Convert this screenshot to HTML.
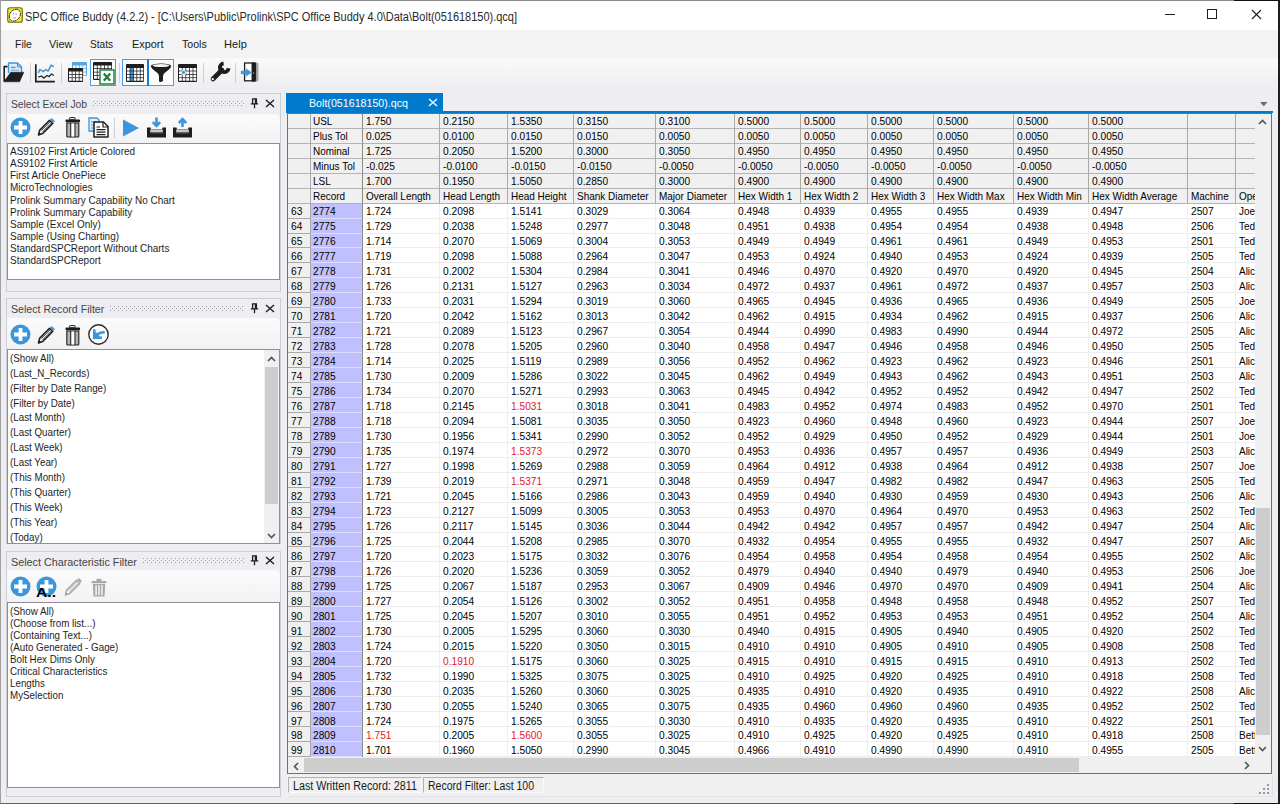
<!DOCTYPE html>
<html><head><meta charset="utf-8"><style>
html,body{margin:0;padding:0;width:1280px;height:804px;overflow:hidden;background:#eeeef2;font-family:"Liberation Sans",sans-serif;}
.t{position:absolute;white-space:pre;line-height:1;transform-origin:0 0;}
svg{position:absolute;overflow:visible}
</style></head><body>
<div style="position:absolute;left:0px;top:0px;width:1280px;height:804px;background:#eeeef2"></div>
<div style="position:absolute;left:0px;top:0px;width:1280px;height:30px;background:#ffffff"></div>
<div style="position:absolute;left:0px;top:30px;width:1280px;height:28px;background:#f3f3f4"></div>
<div style="position:absolute;left:0px;top:58px;width:1280px;height:29px;background:linear-gradient(#fafafa,#f3f3f5 60%,#eeeef2)"></div>
<div style="position:absolute;left:0px;top:0px;width:1280px;height:1px;background:#8a8a8a"></div>
<div style="position:absolute;left:0px;top:0px;width:1px;height:804px;background:#a0a0a0"></div>
<div style="position:absolute;left:1278px;top:0px;width:2px;height:804px;background:#1e1e1e"></div>
<div style="position:absolute;left:0px;top:803px;width:1280px;height:1px;background:#606060"></div>
<div style="position:absolute;left:1234px;top:803px;width:46px;height:1px;background:#111"></div>
<div class="t" style="left:25.00px;top:10.60px;font-size:12px;color:#2a2a2a;transform:scaleX(0.9148);">SPC Office Buddy (4.2.2) - [C:\Users\Public\Prolink\SPC Office Buddy 4.0\Data\Bolt(051618150).qcq]</div>
<div class="t" style="left:14.60px;top:38.52px;font-size:11.5px;color:#1a1a1a;transform:scaleX(0.9120);">File</div>
<div class="t" style="left:49.20px;top:38.52px;font-size:11.5px;color:#1a1a1a;transform:scaleX(0.9466);">View</div>
<div class="t" style="left:90.40px;top:38.52px;font-size:11.5px;color:#1a1a1a;transform:scaleX(0.8772);">Stats</div>
<div class="t" style="left:131.70px;top:38.52px;font-size:11.5px;color:#1a1a1a;transform:scaleX(0.9474);">Export</div>
<div class="t" style="left:181.50px;top:38.52px;font-size:11.5px;color:#1a1a1a;transform:scaleX(0.9233);">Tools</div>
<div class="t" style="left:224.20px;top:38.52px;font-size:11.5px;color:#1a1a1a;transform:scaleX(0.9638);">Help</div>
<div style="position:absolute;left:6px;top:93px;width:275px;height:199px;background:#eeeef2;box-sizing:border-box;border:1px solid #ccced6;border-bottom:none"></div>
<div style="position:absolute;left:7px;top:114px;width:273px;height:29px;background:linear-gradient(#fbfbfb,#f2f2f4);border-top-right-radius:5px"></div>
<div style="position:absolute;left:7px;top:143px;width:273px;height:137px;background:#fff;box-sizing:border-box;border:1px solid #8e8f96"></div>
<div class="t" style="left:11.00px;top:98.62px;font-size:11.5px;color:#444;transform:scaleX(0.8940);">Select Excel Job</div>
<div style="position:absolute;left:6px;top:280px;width:275px;height:12px;background:#eeeef2;box-sizing:border-box;border-left:1px solid #ccced6;border-right:1px solid #ccced6;border-bottom:1px solid #ccced6"></div>
<div style="position:absolute;left:6px;top:298px;width:275px;height:246px;background:#eeeef2;box-sizing:border-box;border:1px solid #ccced6;border-bottom:none"></div>
<div style="position:absolute;left:7px;top:318px;width:273px;height:31px;background:linear-gradient(#fbfbfb,#f2f2f4);border-top-right-radius:5px"></div>
<div style="position:absolute;left:7px;top:349px;width:273px;height:195px;background:#fff;box-sizing:border-box;border:1px solid #8e8f96"></div>
<div class="t" style="left:11.00px;top:303.62px;font-size:11.5px;color:#444;transform:scaleX(0.9239);">Select Record Filter</div>
<div style="position:absolute;left:6px;top:551px;width:275px;height:246px;background:#eeeef2;box-sizing:border-box;border:1px solid #ccced6;border-bottom:none"></div>
<div style="position:absolute;left:7px;top:570px;width:273px;height:32px;background:linear-gradient(#fbfbfb,#f2f2f4);border-top-right-radius:5px"></div>
<div style="position:absolute;left:7px;top:602px;width:273px;height:186px;background:#fff;box-sizing:border-box;border:1px solid #8e8f96"></div>
<div class="t" style="left:11.00px;top:556.62px;font-size:11.5px;color:#444;transform:scaleX(0.9373);">Select Characteristic Filter</div>
<div style="position:absolute;left:6px;top:788px;width:275px;height:9px;background:#eeeef2;box-sizing:border-box;border-left:1px solid #ccced6;border-right:1px solid #ccced6;border-bottom:1px solid #ccced6"></div>
<div class="t" style="left:9.80px;top:145.95px;font-size:11px;color:#1e1e1e;transform:scaleX(0.9050);">AS9102 First Article Colored</div>
<div class="t" style="left:9.80px;top:158.12px;font-size:11px;color:#1e1e1e;transform:scaleX(0.9050);">AS9102 First Article</div>
<div class="t" style="left:9.80px;top:170.29px;font-size:11px;color:#1e1e1e;transform:scaleX(0.9050);">First Article OnePiece</div>
<div class="t" style="left:9.80px;top:182.46px;font-size:11px;color:#1e1e1e;transform:scaleX(0.9050);">MicroTechnologies</div>
<div class="t" style="left:9.80px;top:194.63px;font-size:11px;color:#1e1e1e;transform:scaleX(0.9050);">Prolink Summary Capability No Chart</div>
<div class="t" style="left:9.80px;top:206.80px;font-size:11px;color:#1e1e1e;transform:scaleX(0.9050);">Prolink Summary Capability</div>
<div class="t" style="left:9.80px;top:218.97px;font-size:11px;color:#1e1e1e;transform:scaleX(0.9050);">Sample (Excel Only)</div>
<div class="t" style="left:9.80px;top:231.14px;font-size:11px;color:#1e1e1e;transform:scaleX(0.9050);">Sample (Using Charting)</div>
<div class="t" style="left:9.80px;top:243.31px;font-size:11px;color:#1e1e1e;transform:scaleX(0.9050);">StandardSPCReport Without Charts</div>
<div class="t" style="left:9.80px;top:255.48px;font-size:11px;color:#1e1e1e;transform:scaleX(0.9050);">StandardSPCReport</div>
<div class="t" style="left:10.30px;top:352.65px;font-size:11px;color:#1e1e1e;transform:scaleX(0.8900);">(Show All)</div>
<div class="t" style="left:10.30px;top:367.60px;font-size:11px;color:#1e1e1e;transform:scaleX(0.8900);">(Last_N_Records)</div>
<div class="t" style="left:10.30px;top:382.55px;font-size:11px;color:#1e1e1e;transform:scaleX(0.8900);">(Filter by Date Range)</div>
<div class="t" style="left:10.30px;top:397.50px;font-size:11px;color:#1e1e1e;transform:scaleX(0.8900);">(Filter by Date)</div>
<div class="t" style="left:10.30px;top:412.45px;font-size:11px;color:#1e1e1e;transform:scaleX(0.8900);">(Last Month)</div>
<div class="t" style="left:10.30px;top:427.40px;font-size:11px;color:#1e1e1e;transform:scaleX(0.8900);">(Last Quarter)</div>
<div class="t" style="left:10.30px;top:442.35px;font-size:11px;color:#1e1e1e;transform:scaleX(0.8900);">(Last Week)</div>
<div class="t" style="left:10.30px;top:457.30px;font-size:11px;color:#1e1e1e;transform:scaleX(0.8900);">(Last Year)</div>
<div class="t" style="left:10.30px;top:472.25px;font-size:11px;color:#1e1e1e;transform:scaleX(0.8900);">(This Month)</div>
<div class="t" style="left:10.30px;top:487.20px;font-size:11px;color:#1e1e1e;transform:scaleX(0.8900);">(This Quarter)</div>
<div class="t" style="left:10.30px;top:502.15px;font-size:11px;color:#1e1e1e;transform:scaleX(0.8900);">(This Week)</div>
<div class="t" style="left:10.30px;top:517.10px;font-size:11px;color:#1e1e1e;transform:scaleX(0.8900);">(This Year)</div>
<div class="t" style="left:10.30px;top:532.05px;font-size:11px;color:#1e1e1e;transform:scaleX(0.8900);">(Today)</div>
<div class="t" style="left:10.30px;top:605.75px;font-size:11px;color:#1e1e1e;transform:scaleX(0.8900);">(Show All)</div>
<div class="t" style="left:10.30px;top:617.77px;font-size:11px;color:#1e1e1e;transform:scaleX(0.8900);">(Choose from list...)</div>
<div class="t" style="left:10.30px;top:629.79px;font-size:11px;color:#1e1e1e;transform:scaleX(0.8900);">(Containing Text...)</div>
<div class="t" style="left:10.30px;top:641.81px;font-size:11px;color:#1e1e1e;transform:scaleX(0.8900);">(Auto Generated - Gage)</div>
<div class="t" style="left:10.30px;top:653.83px;font-size:11px;color:#1e1e1e;transform:scaleX(0.8900);">Bolt Hex Dims Only</div>
<div class="t" style="left:10.30px;top:665.85px;font-size:11px;color:#1e1e1e;transform:scaleX(0.8900);">Critical Characteristics</div>
<div class="t" style="left:10.30px;top:677.87px;font-size:11px;color:#1e1e1e;transform:scaleX(0.8900);">Lengths</div>
<div class="t" style="left:10.30px;top:689.89px;font-size:11px;color:#1e1e1e;transform:scaleX(0.8900);">MySelection</div>
<div style="position:absolute;left:286px;top:93px;width:157px;height:20px;background:#007acc"></div>
<div style="position:absolute;left:286px;top:111px;width:987px;height:2px;background:#007acc"></div>
<div class="t" style="left:309.00px;top:97.72px;font-size:11.5px;color:#fff;transform:scaleX(0.9271);">Bolt(051618150).qcq</div>
<div style="position:absolute;left:287px;top:113px;width:985px;height:661px;background:#fff;box-sizing:border-box;border:1px solid #707070"></div>
<div style="position:absolute;left:287px;top:774px;width:985px;height:22px;background:#f0f0f0;box-shadow:1px 1px 0 #e2e2e6"></div>
<div style="position:absolute;left:288px;top:777px;width:134px;height:16px;box-sizing:border-box;border:1px solid #b0b0b0;border-right-color:#fafafa;border-bottom-color:#fafafa"></div>
<div style="position:absolute;left:423px;top:777px;width:121px;height:16px;box-sizing:border-box;border:1px solid #b0b0b0;border-right-color:#fafafa;border-bottom-color:#fafafa"></div>
<div class="t" style="left:293.10px;top:779.70px;font-size:12px;color:#1a1a1a;transform:scaleX(0.8966);">Last Written Record: 2811</div>
<div class="t" style="left:427.90px;top:779.70px;font-size:12px;color:#1a1a1a;transform:scaleX(0.8732);">Record Filter: Last 100</div>
<div style="position:absolute;left:288px;top:114px;width:967px;height:89px;background:#f0f0f0"></div>
<div style="position:absolute;left:288px;top:204px;width:22px;height:553px;background:#f0f0f0"></div>
<div style="position:absolute;left:311px;top:204px;width:51px;height:553px;background:#c0c0fe"></div>
<div style="position:absolute;left:288px;top:114px;width:967px;height:643px;overflow:hidden">
<div style="position:absolute;left:0px;top:14px;width:967px;height:1px;background:#b4b4b4"></div>
<div style="position:absolute;left:0px;top:29px;width:967px;height:1px;background:#b4b4b4"></div>
<div style="position:absolute;left:0px;top:44px;width:967px;height:1px;background:#b4b4b4"></div>
<div style="position:absolute;left:0px;top:59px;width:967px;height:1px;background:#b4b4b4"></div>
<div style="position:absolute;left:0px;top:74px;width:967px;height:1px;background:#b4b4b4"></div>
<div style="position:absolute;left:0px;top:89px;width:967px;height:1px;background:#b4b4b4"></div>
<div style="position:absolute;left:74px;top:104px;width:893px;height:1px;background:#eeeeee"></div>
<div style="position:absolute;left:0px;top:104px;width:22px;height:1px;background:#a9a9a9"></div>
<div style="position:absolute;left:23px;top:104px;width:51px;height:1px;background:#dcdcfc"></div>
<div style="position:absolute;left:74px;top:119px;width:893px;height:1px;background:#eeeeee"></div>
<div style="position:absolute;left:0px;top:119px;width:22px;height:1px;background:#a9a9a9"></div>
<div style="position:absolute;left:23px;top:119px;width:51px;height:1px;background:#dcdcfc"></div>
<div style="position:absolute;left:74px;top:133px;width:893px;height:1px;background:#eeeeee"></div>
<div style="position:absolute;left:0px;top:133px;width:22px;height:1px;background:#a9a9a9"></div>
<div style="position:absolute;left:23px;top:133px;width:51px;height:1px;background:#dcdcfc"></div>
<div style="position:absolute;left:74px;top:148px;width:893px;height:1px;background:#eeeeee"></div>
<div style="position:absolute;left:0px;top:148px;width:22px;height:1px;background:#a9a9a9"></div>
<div style="position:absolute;left:23px;top:148px;width:51px;height:1px;background:#dcdcfc"></div>
<div style="position:absolute;left:74px;top:163px;width:893px;height:1px;background:#eeeeee"></div>
<div style="position:absolute;left:0px;top:163px;width:22px;height:1px;background:#a9a9a9"></div>
<div style="position:absolute;left:23px;top:163px;width:51px;height:1px;background:#dcdcfc"></div>
<div style="position:absolute;left:74px;top:178px;width:893px;height:1px;background:#eeeeee"></div>
<div style="position:absolute;left:0px;top:178px;width:22px;height:1px;background:#a9a9a9"></div>
<div style="position:absolute;left:23px;top:178px;width:51px;height:1px;background:#dcdcfc"></div>
<div style="position:absolute;left:74px;top:193px;width:893px;height:1px;background:#eeeeee"></div>
<div style="position:absolute;left:0px;top:193px;width:22px;height:1px;background:#a9a9a9"></div>
<div style="position:absolute;left:23px;top:193px;width:51px;height:1px;background:#dcdcfc"></div>
<div style="position:absolute;left:74px;top:208px;width:893px;height:1px;background:#eeeeee"></div>
<div style="position:absolute;left:0px;top:208px;width:22px;height:1px;background:#a9a9a9"></div>
<div style="position:absolute;left:23px;top:208px;width:51px;height:1px;background:#dcdcfc"></div>
<div style="position:absolute;left:74px;top:223px;width:893px;height:1px;background:#eeeeee"></div>
<div style="position:absolute;left:0px;top:223px;width:22px;height:1px;background:#a9a9a9"></div>
<div style="position:absolute;left:23px;top:223px;width:51px;height:1px;background:#dcdcfc"></div>
<div style="position:absolute;left:74px;top:238px;width:893px;height:1px;background:#eeeeee"></div>
<div style="position:absolute;left:0px;top:238px;width:22px;height:1px;background:#a9a9a9"></div>
<div style="position:absolute;left:23px;top:238px;width:51px;height:1px;background:#dcdcfc"></div>
<div style="position:absolute;left:74px;top:253px;width:893px;height:1px;background:#eeeeee"></div>
<div style="position:absolute;left:0px;top:253px;width:22px;height:1px;background:#a9a9a9"></div>
<div style="position:absolute;left:23px;top:253px;width:51px;height:1px;background:#dcdcfc"></div>
<div style="position:absolute;left:74px;top:268px;width:893px;height:1px;background:#eeeeee"></div>
<div style="position:absolute;left:0px;top:268px;width:22px;height:1px;background:#a9a9a9"></div>
<div style="position:absolute;left:23px;top:268px;width:51px;height:1px;background:#dcdcfc"></div>
<div style="position:absolute;left:74px;top:283px;width:893px;height:1px;background:#eeeeee"></div>
<div style="position:absolute;left:0px;top:283px;width:22px;height:1px;background:#a9a9a9"></div>
<div style="position:absolute;left:23px;top:283px;width:51px;height:1px;background:#dcdcfc"></div>
<div style="position:absolute;left:74px;top:298px;width:893px;height:1px;background:#eeeeee"></div>
<div style="position:absolute;left:0px;top:298px;width:22px;height:1px;background:#a9a9a9"></div>
<div style="position:absolute;left:23px;top:298px;width:51px;height:1px;background:#dcdcfc"></div>
<div style="position:absolute;left:74px;top:313px;width:893px;height:1px;background:#eeeeee"></div>
<div style="position:absolute;left:0px;top:313px;width:22px;height:1px;background:#a9a9a9"></div>
<div style="position:absolute;left:23px;top:313px;width:51px;height:1px;background:#dcdcfc"></div>
<div style="position:absolute;left:74px;top:328px;width:893px;height:1px;background:#eeeeee"></div>
<div style="position:absolute;left:0px;top:328px;width:22px;height:1px;background:#a9a9a9"></div>
<div style="position:absolute;left:23px;top:328px;width:51px;height:1px;background:#dcdcfc"></div>
<div style="position:absolute;left:74px;top:343px;width:893px;height:1px;background:#eeeeee"></div>
<div style="position:absolute;left:0px;top:343px;width:22px;height:1px;background:#a9a9a9"></div>
<div style="position:absolute;left:23px;top:343px;width:51px;height:1px;background:#dcdcfc"></div>
<div style="position:absolute;left:74px;top:358px;width:893px;height:1px;background:#eeeeee"></div>
<div style="position:absolute;left:0px;top:358px;width:22px;height:1px;background:#a9a9a9"></div>
<div style="position:absolute;left:23px;top:358px;width:51px;height:1px;background:#dcdcfc"></div>
<div style="position:absolute;left:74px;top:373px;width:893px;height:1px;background:#eeeeee"></div>
<div style="position:absolute;left:0px;top:373px;width:22px;height:1px;background:#a9a9a9"></div>
<div style="position:absolute;left:23px;top:373px;width:51px;height:1px;background:#dcdcfc"></div>
<div style="position:absolute;left:74px;top:388px;width:893px;height:1px;background:#eeeeee"></div>
<div style="position:absolute;left:0px;top:388px;width:22px;height:1px;background:#a9a9a9"></div>
<div style="position:absolute;left:23px;top:388px;width:51px;height:1px;background:#dcdcfc"></div>
<div style="position:absolute;left:74px;top:403px;width:893px;height:1px;background:#eeeeee"></div>
<div style="position:absolute;left:0px;top:403px;width:22px;height:1px;background:#a9a9a9"></div>
<div style="position:absolute;left:23px;top:403px;width:51px;height:1px;background:#dcdcfc"></div>
<div style="position:absolute;left:74px;top:418px;width:893px;height:1px;background:#eeeeee"></div>
<div style="position:absolute;left:0px;top:418px;width:22px;height:1px;background:#a9a9a9"></div>
<div style="position:absolute;left:23px;top:418px;width:51px;height:1px;background:#dcdcfc"></div>
<div style="position:absolute;left:74px;top:432px;width:893px;height:1px;background:#eeeeee"></div>
<div style="position:absolute;left:0px;top:432px;width:22px;height:1px;background:#a9a9a9"></div>
<div style="position:absolute;left:23px;top:432px;width:51px;height:1px;background:#dcdcfc"></div>
<div style="position:absolute;left:74px;top:447px;width:893px;height:1px;background:#eeeeee"></div>
<div style="position:absolute;left:0px;top:447px;width:22px;height:1px;background:#a9a9a9"></div>
<div style="position:absolute;left:23px;top:447px;width:51px;height:1px;background:#dcdcfc"></div>
<div style="position:absolute;left:74px;top:462px;width:893px;height:1px;background:#eeeeee"></div>
<div style="position:absolute;left:0px;top:462px;width:22px;height:1px;background:#a9a9a9"></div>
<div style="position:absolute;left:23px;top:462px;width:51px;height:1px;background:#dcdcfc"></div>
<div style="position:absolute;left:74px;top:477px;width:893px;height:1px;background:#eeeeee"></div>
<div style="position:absolute;left:0px;top:477px;width:22px;height:1px;background:#a9a9a9"></div>
<div style="position:absolute;left:23px;top:477px;width:51px;height:1px;background:#dcdcfc"></div>
<div style="position:absolute;left:74px;top:492px;width:893px;height:1px;background:#eeeeee"></div>
<div style="position:absolute;left:0px;top:492px;width:22px;height:1px;background:#a9a9a9"></div>
<div style="position:absolute;left:23px;top:492px;width:51px;height:1px;background:#dcdcfc"></div>
<div style="position:absolute;left:74px;top:507px;width:893px;height:1px;background:#eeeeee"></div>
<div style="position:absolute;left:0px;top:507px;width:22px;height:1px;background:#a9a9a9"></div>
<div style="position:absolute;left:23px;top:507px;width:51px;height:1px;background:#dcdcfc"></div>
<div style="position:absolute;left:74px;top:522px;width:893px;height:1px;background:#eeeeee"></div>
<div style="position:absolute;left:0px;top:522px;width:22px;height:1px;background:#a9a9a9"></div>
<div style="position:absolute;left:23px;top:522px;width:51px;height:1px;background:#dcdcfc"></div>
<div style="position:absolute;left:74px;top:537px;width:893px;height:1px;background:#eeeeee"></div>
<div style="position:absolute;left:0px;top:537px;width:22px;height:1px;background:#a9a9a9"></div>
<div style="position:absolute;left:23px;top:537px;width:51px;height:1px;background:#dcdcfc"></div>
<div style="position:absolute;left:74px;top:552px;width:893px;height:1px;background:#eeeeee"></div>
<div style="position:absolute;left:0px;top:552px;width:22px;height:1px;background:#a9a9a9"></div>
<div style="position:absolute;left:23px;top:552px;width:51px;height:1px;background:#dcdcfc"></div>
<div style="position:absolute;left:74px;top:567px;width:893px;height:1px;background:#eeeeee"></div>
<div style="position:absolute;left:0px;top:567px;width:22px;height:1px;background:#a9a9a9"></div>
<div style="position:absolute;left:23px;top:567px;width:51px;height:1px;background:#dcdcfc"></div>
<div style="position:absolute;left:74px;top:582px;width:893px;height:1px;background:#eeeeee"></div>
<div style="position:absolute;left:0px;top:582px;width:22px;height:1px;background:#a9a9a9"></div>
<div style="position:absolute;left:23px;top:582px;width:51px;height:1px;background:#dcdcfc"></div>
<div style="position:absolute;left:74px;top:597px;width:893px;height:1px;background:#eeeeee"></div>
<div style="position:absolute;left:0px;top:597px;width:22px;height:1px;background:#a9a9a9"></div>
<div style="position:absolute;left:23px;top:597px;width:51px;height:1px;background:#dcdcfc"></div>
<div style="position:absolute;left:74px;top:612px;width:893px;height:1px;background:#eeeeee"></div>
<div style="position:absolute;left:0px;top:612px;width:22px;height:1px;background:#a9a9a9"></div>
<div style="position:absolute;left:23px;top:612px;width:51px;height:1px;background:#dcdcfc"></div>
<div style="position:absolute;left:74px;top:627px;width:893px;height:1px;background:#eeeeee"></div>
<div style="position:absolute;left:0px;top:627px;width:22px;height:1px;background:#a9a9a9"></div>
<div style="position:absolute;left:23px;top:627px;width:51px;height:1px;background:#dcdcfc"></div>
<div style="position:absolute;left:74px;top:642px;width:893px;height:1px;background:#eeeeee"></div>
<div style="position:absolute;left:0px;top:642px;width:22px;height:1px;background:#a9a9a9"></div>
<div style="position:absolute;left:23px;top:642px;width:51px;height:1px;background:#dcdcfc"></div>
<div style="position:absolute;left:22px;top:0px;width:1px;height:643px;background:#a9a9a9"></div>
<div style="position:absolute;left:74px;top:0px;width:1px;height:643px;background:#8c8c8c"></div>
<div style="position:absolute;left:151px;top:0px;width:1px;height:89px;background:#a9a9a9"></div>
<div style="position:absolute;left:151px;top:90px;width:1px;height:553px;background:#eeeeee"></div>
<div style="position:absolute;left:219px;top:0px;width:1px;height:89px;background:#a9a9a9"></div>
<div style="position:absolute;left:219px;top:90px;width:1px;height:553px;background:#eeeeee"></div>
<div style="position:absolute;left:285px;top:0px;width:1px;height:89px;background:#a9a9a9"></div>
<div style="position:absolute;left:285px;top:90px;width:1px;height:553px;background:#eeeeee"></div>
<div style="position:absolute;left:367px;top:0px;width:1px;height:89px;background:#a9a9a9"></div>
<div style="position:absolute;left:367px;top:90px;width:1px;height:553px;background:#eeeeee"></div>
<div style="position:absolute;left:446px;top:0px;width:1px;height:89px;background:#a9a9a9"></div>
<div style="position:absolute;left:446px;top:90px;width:1px;height:553px;background:#eeeeee"></div>
<div style="position:absolute;left:512px;top:0px;width:1px;height:89px;background:#a9a9a9"></div>
<div style="position:absolute;left:512px;top:90px;width:1px;height:553px;background:#eeeeee"></div>
<div style="position:absolute;left:579px;top:0px;width:1px;height:89px;background:#a9a9a9"></div>
<div style="position:absolute;left:579px;top:90px;width:1px;height:553px;background:#eeeeee"></div>
<div style="position:absolute;left:645px;top:0px;width:1px;height:89px;background:#a9a9a9"></div>
<div style="position:absolute;left:645px;top:90px;width:1px;height:553px;background:#eeeeee"></div>
<div style="position:absolute;left:725px;top:0px;width:1px;height:89px;background:#a9a9a9"></div>
<div style="position:absolute;left:725px;top:90px;width:1px;height:553px;background:#eeeeee"></div>
<div style="position:absolute;left:800px;top:0px;width:1px;height:89px;background:#a9a9a9"></div>
<div style="position:absolute;left:800px;top:90px;width:1px;height:553px;background:#eeeeee"></div>
<div style="position:absolute;left:899px;top:0px;width:1px;height:89px;background:#a9a9a9"></div>
<div style="position:absolute;left:899px;top:90px;width:1px;height:553px;background:#eeeeee"></div>
<div style="position:absolute;left:947px;top:0px;width:1px;height:89px;background:#a9a9a9"></div>
<div style="position:absolute;left:947px;top:90px;width:1px;height:553px;background:#eeeeee"></div>
</div>
<div style="position:absolute;left:288px;top:114px;width:967px;height:643px;overflow:hidden">
<div class="t" style="left:24.50px;top:2.48px;font-size:10.5px;color:#000;transform:scaleX(0.9500);">USL</div>
<div class="t" style="left:77.50px;top:2.48px;font-size:10.5px;color:#000;transform:scaleX(0.9700);">1.750</div>
<div class="t" style="left:154.50px;top:2.48px;font-size:10.5px;color:#000;transform:scaleX(0.9700);">0.2150</div>
<div class="t" style="left:222.50px;top:2.48px;font-size:10.5px;color:#000;transform:scaleX(0.9700);">1.5350</div>
<div class="t" style="left:288.50px;top:2.48px;font-size:10.5px;color:#000;transform:scaleX(0.9700);">0.3150</div>
<div class="t" style="left:370.50px;top:2.48px;font-size:10.5px;color:#000;transform:scaleX(0.9700);">0.3100</div>
<div class="t" style="left:449.50px;top:2.48px;font-size:10.5px;color:#000;transform:scaleX(0.9700);">0.5000</div>
<div class="t" style="left:515.50px;top:2.48px;font-size:10.5px;color:#000;transform:scaleX(0.9700);">0.5000</div>
<div class="t" style="left:582.50px;top:2.48px;font-size:10.5px;color:#000;transform:scaleX(0.9700);">0.5000</div>
<div class="t" style="left:648.50px;top:2.48px;font-size:10.5px;color:#000;transform:scaleX(0.9700);">0.5000</div>
<div class="t" style="left:728.50px;top:2.48px;font-size:10.5px;color:#000;transform:scaleX(0.9700);">0.5000</div>
<div class="t" style="left:803.50px;top:2.48px;font-size:10.5px;color:#000;transform:scaleX(0.9700);">0.5000</div>
<div class="t" style="left:24.50px;top:17.42px;font-size:10.5px;color:#000;transform:scaleX(0.9500);">Plus Tol</div>
<div class="t" style="left:77.50px;top:17.42px;font-size:10.5px;color:#000;transform:scaleX(0.9700);">0.025</div>
<div class="t" style="left:154.50px;top:17.42px;font-size:10.5px;color:#000;transform:scaleX(0.9700);">0.0100</div>
<div class="t" style="left:222.50px;top:17.42px;font-size:10.5px;color:#000;transform:scaleX(0.9700);">0.0150</div>
<div class="t" style="left:288.50px;top:17.42px;font-size:10.5px;color:#000;transform:scaleX(0.9700);">0.0150</div>
<div class="t" style="left:370.50px;top:17.42px;font-size:10.5px;color:#000;transform:scaleX(0.9700);">0.0050</div>
<div class="t" style="left:449.50px;top:17.42px;font-size:10.5px;color:#000;transform:scaleX(0.9700);">0.0050</div>
<div class="t" style="left:515.50px;top:17.42px;font-size:10.5px;color:#000;transform:scaleX(0.9700);">0.0050</div>
<div class="t" style="left:582.50px;top:17.42px;font-size:10.5px;color:#000;transform:scaleX(0.9700);">0.0050</div>
<div class="t" style="left:648.50px;top:17.42px;font-size:10.5px;color:#000;transform:scaleX(0.9700);">0.0050</div>
<div class="t" style="left:728.50px;top:17.42px;font-size:10.5px;color:#000;transform:scaleX(0.9700);">0.0050</div>
<div class="t" style="left:803.50px;top:17.42px;font-size:10.5px;color:#000;transform:scaleX(0.9700);">0.0050</div>
<div class="t" style="left:24.50px;top:32.38px;font-size:10.5px;color:#000;transform:scaleX(0.9500);">Nominal</div>
<div class="t" style="left:77.50px;top:32.38px;font-size:10.5px;color:#000;transform:scaleX(0.9700);">1.725</div>
<div class="t" style="left:154.50px;top:32.38px;font-size:10.5px;color:#000;transform:scaleX(0.9700);">0.2050</div>
<div class="t" style="left:222.50px;top:32.38px;font-size:10.5px;color:#000;transform:scaleX(0.9700);">1.5200</div>
<div class="t" style="left:288.50px;top:32.38px;font-size:10.5px;color:#000;transform:scaleX(0.9700);">0.3000</div>
<div class="t" style="left:370.50px;top:32.38px;font-size:10.5px;color:#000;transform:scaleX(0.9700);">0.3050</div>
<div class="t" style="left:449.50px;top:32.38px;font-size:10.5px;color:#000;transform:scaleX(0.9700);">0.4950</div>
<div class="t" style="left:515.50px;top:32.38px;font-size:10.5px;color:#000;transform:scaleX(0.9700);">0.4950</div>
<div class="t" style="left:582.50px;top:32.38px;font-size:10.5px;color:#000;transform:scaleX(0.9700);">0.4950</div>
<div class="t" style="left:648.50px;top:32.38px;font-size:10.5px;color:#000;transform:scaleX(0.9700);">0.4950</div>
<div class="t" style="left:728.50px;top:32.38px;font-size:10.5px;color:#000;transform:scaleX(0.9700);">0.4950</div>
<div class="t" style="left:803.50px;top:32.38px;font-size:10.5px;color:#000;transform:scaleX(0.9700);">0.4950</div>
<div class="t" style="left:24.50px;top:47.33px;font-size:10.5px;color:#000;transform:scaleX(0.9500);">Minus Tol</div>
<div class="t" style="left:77.50px;top:47.33px;font-size:10.5px;color:#000;transform:scaleX(0.9700);">-0.025</div>
<div class="t" style="left:154.50px;top:47.33px;font-size:10.5px;color:#000;transform:scaleX(0.9700);">-0.0100</div>
<div class="t" style="left:222.50px;top:47.33px;font-size:10.5px;color:#000;transform:scaleX(0.9700);">-0.0150</div>
<div class="t" style="left:288.50px;top:47.33px;font-size:10.5px;color:#000;transform:scaleX(0.9700);">-0.0150</div>
<div class="t" style="left:370.50px;top:47.33px;font-size:10.5px;color:#000;transform:scaleX(0.9700);">-0.0050</div>
<div class="t" style="left:449.50px;top:47.33px;font-size:10.5px;color:#000;transform:scaleX(0.9700);">-0.0050</div>
<div class="t" style="left:515.50px;top:47.33px;font-size:10.5px;color:#000;transform:scaleX(0.9700);">-0.0050</div>
<div class="t" style="left:582.50px;top:47.33px;font-size:10.5px;color:#000;transform:scaleX(0.9700);">-0.0050</div>
<div class="t" style="left:648.50px;top:47.33px;font-size:10.5px;color:#000;transform:scaleX(0.9700);">-0.0050</div>
<div class="t" style="left:728.50px;top:47.33px;font-size:10.5px;color:#000;transform:scaleX(0.9700);">-0.0050</div>
<div class="t" style="left:803.50px;top:47.33px;font-size:10.5px;color:#000;transform:scaleX(0.9700);">-0.0050</div>
<div class="t" style="left:24.50px;top:62.27px;font-size:10.5px;color:#000;transform:scaleX(0.9500);">LSL</div>
<div class="t" style="left:77.50px;top:62.27px;font-size:10.5px;color:#000;transform:scaleX(0.9700);">1.700</div>
<div class="t" style="left:154.50px;top:62.27px;font-size:10.5px;color:#000;transform:scaleX(0.9700);">0.1950</div>
<div class="t" style="left:222.50px;top:62.27px;font-size:10.5px;color:#000;transform:scaleX(0.9700);">1.5050</div>
<div class="t" style="left:288.50px;top:62.27px;font-size:10.5px;color:#000;transform:scaleX(0.9700);">0.2850</div>
<div class="t" style="left:370.50px;top:62.27px;font-size:10.5px;color:#000;transform:scaleX(0.9700);">0.3000</div>
<div class="t" style="left:449.50px;top:62.27px;font-size:10.5px;color:#000;transform:scaleX(0.9700);">0.4900</div>
<div class="t" style="left:515.50px;top:62.27px;font-size:10.5px;color:#000;transform:scaleX(0.9700);">0.4900</div>
<div class="t" style="left:582.50px;top:62.27px;font-size:10.5px;color:#000;transform:scaleX(0.9700);">0.4900</div>
<div class="t" style="left:648.50px;top:62.27px;font-size:10.5px;color:#000;transform:scaleX(0.9700);">0.4900</div>
<div class="t" style="left:728.50px;top:62.27px;font-size:10.5px;color:#000;transform:scaleX(0.9700);">0.4900</div>
<div class="t" style="left:803.50px;top:62.27px;font-size:10.5px;color:#000;transform:scaleX(0.9700);">0.4900</div>
<div class="t" style="left:24.50px;top:77.23px;font-size:10.5px;color:#000;transform:scaleX(0.9500);">Record</div>
<div class="t" style="left:77.50px;top:77.23px;font-size:10.5px;color:#000;transform:scaleX(0.9500);">Overall Length</div>
<div class="t" style="left:154.50px;top:77.23px;font-size:10.5px;color:#000;transform:scaleX(0.9500);">Head Length</div>
<div class="t" style="left:222.50px;top:77.23px;font-size:10.5px;color:#000;transform:scaleX(0.9500);">Head Height</div>
<div class="t" style="left:288.50px;top:77.23px;font-size:10.5px;color:#000;transform:scaleX(0.9500);">Shank Diameter</div>
<div class="t" style="left:370.50px;top:77.23px;font-size:10.5px;color:#000;transform:scaleX(0.9500);">Major Diameter</div>
<div class="t" style="left:449.50px;top:77.23px;font-size:10.5px;color:#000;transform:scaleX(0.9500);">Hex Width 1</div>
<div class="t" style="left:515.50px;top:77.23px;font-size:10.5px;color:#000;transform:scaleX(0.9500);">Hex Width 2</div>
<div class="t" style="left:582.50px;top:77.23px;font-size:10.5px;color:#000;transform:scaleX(0.9500);">Hex Width 3</div>
<div class="t" style="left:648.50px;top:77.23px;font-size:10.5px;color:#000;transform:scaleX(0.9500);">Hex Width Max</div>
<div class="t" style="left:728.50px;top:77.23px;font-size:10.5px;color:#000;transform:scaleX(0.9500);">Hex Width Min</div>
<div class="t" style="left:803.50px;top:77.23px;font-size:10.5px;color:#000;transform:scaleX(0.9500);">Hex Width Average</div>
<div class="t" style="left:902.50px;top:77.23px;font-size:10.5px;color:#000;transform:scaleX(0.9500);">Machine</div>
<div class="t" style="left:950.50px;top:77.23px;font-size:10.5px;color:#000;transform:scaleX(0.9500);">Operator</div>
<div class="t" style="left:2.60px;top:92.17px;font-size:10.5px;color:#000;transform:scaleX(0.9700);">63</div>
<div class="t" style="left:24.50px;top:92.17px;font-size:10.5px;color:#000;transform:scaleX(0.9700);">2774</div>
<div class="t" style="left:77.50px;top:92.17px;font-size:10.5px;color:#000;transform:scaleX(0.9700);">1.724</div>
<div class="t" style="left:154.50px;top:92.17px;font-size:10.5px;color:#000;transform:scaleX(0.9700);">0.2098</div>
<div class="t" style="left:222.50px;top:92.17px;font-size:10.5px;color:#000;transform:scaleX(0.9700);">1.5141</div>
<div class="t" style="left:288.50px;top:92.17px;font-size:10.5px;color:#000;transform:scaleX(0.9700);">0.3029</div>
<div class="t" style="left:370.50px;top:92.17px;font-size:10.5px;color:#000;transform:scaleX(0.9700);">0.3064</div>
<div class="t" style="left:449.50px;top:92.17px;font-size:10.5px;color:#000;transform:scaleX(0.9700);">0.4948</div>
<div class="t" style="left:515.50px;top:92.17px;font-size:10.5px;color:#000;transform:scaleX(0.9700);">0.4939</div>
<div class="t" style="left:582.50px;top:92.17px;font-size:10.5px;color:#000;transform:scaleX(0.9700);">0.4955</div>
<div class="t" style="left:648.50px;top:92.17px;font-size:10.5px;color:#000;transform:scaleX(0.9700);">0.4955</div>
<div class="t" style="left:728.50px;top:92.17px;font-size:10.5px;color:#000;transform:scaleX(0.9700);">0.4939</div>
<div class="t" style="left:803.50px;top:92.17px;font-size:10.5px;color:#000;transform:scaleX(0.9700);">0.4947</div>
<div class="t" style="left:902.50px;top:92.17px;font-size:10.5px;color:#000;transform:scaleX(0.9700);">2507</div>
<div class="t" style="left:950.50px;top:92.17px;font-size:10.5px;color:#000;transform:scaleX(0.9500);">Joe</div>
<div class="t" style="left:2.60px;top:107.16px;font-size:10.5px;color:#000;transform:scaleX(0.9700);">64</div>
<div class="t" style="left:24.50px;top:107.16px;font-size:10.5px;color:#000;transform:scaleX(0.9700);">2775</div>
<div class="t" style="left:77.50px;top:107.16px;font-size:10.5px;color:#000;transform:scaleX(0.9700);">1.729</div>
<div class="t" style="left:154.50px;top:107.16px;font-size:10.5px;color:#000;transform:scaleX(0.9700);">0.2038</div>
<div class="t" style="left:222.50px;top:107.16px;font-size:10.5px;color:#000;transform:scaleX(0.9700);">1.5248</div>
<div class="t" style="left:288.50px;top:107.16px;font-size:10.5px;color:#000;transform:scaleX(0.9700);">0.2977</div>
<div class="t" style="left:370.50px;top:107.16px;font-size:10.5px;color:#000;transform:scaleX(0.9700);">0.3048</div>
<div class="t" style="left:449.50px;top:107.16px;font-size:10.5px;color:#000;transform:scaleX(0.9700);">0.4951</div>
<div class="t" style="left:515.50px;top:107.16px;font-size:10.5px;color:#000;transform:scaleX(0.9700);">0.4938</div>
<div class="t" style="left:582.50px;top:107.16px;font-size:10.5px;color:#000;transform:scaleX(0.9700);">0.4954</div>
<div class="t" style="left:648.50px;top:107.16px;font-size:10.5px;color:#000;transform:scaleX(0.9700);">0.4954</div>
<div class="t" style="left:728.50px;top:107.16px;font-size:10.5px;color:#000;transform:scaleX(0.9700);">0.4938</div>
<div class="t" style="left:803.50px;top:107.16px;font-size:10.5px;color:#000;transform:scaleX(0.9700);">0.4948</div>
<div class="t" style="left:902.50px;top:107.16px;font-size:10.5px;color:#000;transform:scaleX(0.9700);">2506</div>
<div class="t" style="left:950.50px;top:107.16px;font-size:10.5px;color:#000;transform:scaleX(0.9500);">Ted</div>
<div class="t" style="left:2.60px;top:122.14px;font-size:10.5px;color:#000;transform:scaleX(0.9700);">65</div>
<div class="t" style="left:24.50px;top:122.14px;font-size:10.5px;color:#000;transform:scaleX(0.9700);">2776</div>
<div class="t" style="left:77.50px;top:122.14px;font-size:10.5px;color:#000;transform:scaleX(0.9700);">1.714</div>
<div class="t" style="left:154.50px;top:122.14px;font-size:10.5px;color:#000;transform:scaleX(0.9700);">0.2070</div>
<div class="t" style="left:222.50px;top:122.14px;font-size:10.5px;color:#000;transform:scaleX(0.9700);">1.5069</div>
<div class="t" style="left:288.50px;top:122.14px;font-size:10.5px;color:#000;transform:scaleX(0.9700);">0.3004</div>
<div class="t" style="left:370.50px;top:122.14px;font-size:10.5px;color:#000;transform:scaleX(0.9700);">0.3053</div>
<div class="t" style="left:449.50px;top:122.14px;font-size:10.5px;color:#000;transform:scaleX(0.9700);">0.4949</div>
<div class="t" style="left:515.50px;top:122.14px;font-size:10.5px;color:#000;transform:scaleX(0.9700);">0.4949</div>
<div class="t" style="left:582.50px;top:122.14px;font-size:10.5px;color:#000;transform:scaleX(0.9700);">0.4961</div>
<div class="t" style="left:648.50px;top:122.14px;font-size:10.5px;color:#000;transform:scaleX(0.9700);">0.4961</div>
<div class="t" style="left:728.50px;top:122.14px;font-size:10.5px;color:#000;transform:scaleX(0.9700);">0.4949</div>
<div class="t" style="left:803.50px;top:122.14px;font-size:10.5px;color:#000;transform:scaleX(0.9700);">0.4953</div>
<div class="t" style="left:902.50px;top:122.14px;font-size:10.5px;color:#000;transform:scaleX(0.9700);">2501</div>
<div class="t" style="left:950.50px;top:122.14px;font-size:10.5px;color:#000;transform:scaleX(0.9500);">Ted</div>
<div class="t" style="left:2.60px;top:137.11px;font-size:10.5px;color:#000;transform:scaleX(0.9700);">66</div>
<div class="t" style="left:24.50px;top:137.11px;font-size:10.5px;color:#000;transform:scaleX(0.9700);">2777</div>
<div class="t" style="left:77.50px;top:137.11px;font-size:10.5px;color:#000;transform:scaleX(0.9700);">1.719</div>
<div class="t" style="left:154.50px;top:137.11px;font-size:10.5px;color:#000;transform:scaleX(0.9700);">0.2098</div>
<div class="t" style="left:222.50px;top:137.11px;font-size:10.5px;color:#000;transform:scaleX(0.9700);">1.5088</div>
<div class="t" style="left:288.50px;top:137.11px;font-size:10.5px;color:#000;transform:scaleX(0.9700);">0.2964</div>
<div class="t" style="left:370.50px;top:137.11px;font-size:10.5px;color:#000;transform:scaleX(0.9700);">0.3047</div>
<div class="t" style="left:449.50px;top:137.11px;font-size:10.5px;color:#000;transform:scaleX(0.9700);">0.4953</div>
<div class="t" style="left:515.50px;top:137.11px;font-size:10.5px;color:#000;transform:scaleX(0.9700);">0.4924</div>
<div class="t" style="left:582.50px;top:137.11px;font-size:10.5px;color:#000;transform:scaleX(0.9700);">0.4940</div>
<div class="t" style="left:648.50px;top:137.11px;font-size:10.5px;color:#000;transform:scaleX(0.9700);">0.4953</div>
<div class="t" style="left:728.50px;top:137.11px;font-size:10.5px;color:#000;transform:scaleX(0.9700);">0.4924</div>
<div class="t" style="left:803.50px;top:137.11px;font-size:10.5px;color:#000;transform:scaleX(0.9700);">0.4939</div>
<div class="t" style="left:902.50px;top:137.11px;font-size:10.5px;color:#000;transform:scaleX(0.9700);">2505</div>
<div class="t" style="left:950.50px;top:137.11px;font-size:10.5px;color:#000;transform:scaleX(0.9500);">Ted</div>
<div class="t" style="left:2.60px;top:152.09px;font-size:10.5px;color:#000;transform:scaleX(0.9700);">67</div>
<div class="t" style="left:24.50px;top:152.09px;font-size:10.5px;color:#000;transform:scaleX(0.9700);">2778</div>
<div class="t" style="left:77.50px;top:152.09px;font-size:10.5px;color:#000;transform:scaleX(0.9700);">1.731</div>
<div class="t" style="left:154.50px;top:152.09px;font-size:10.5px;color:#000;transform:scaleX(0.9700);">0.2002</div>
<div class="t" style="left:222.50px;top:152.09px;font-size:10.5px;color:#000;transform:scaleX(0.9700);">1.5304</div>
<div class="t" style="left:288.50px;top:152.09px;font-size:10.5px;color:#000;transform:scaleX(0.9700);">0.2984</div>
<div class="t" style="left:370.50px;top:152.09px;font-size:10.5px;color:#000;transform:scaleX(0.9700);">0.3041</div>
<div class="t" style="left:449.50px;top:152.09px;font-size:10.5px;color:#000;transform:scaleX(0.9700);">0.4946</div>
<div class="t" style="left:515.50px;top:152.09px;font-size:10.5px;color:#000;transform:scaleX(0.9700);">0.4970</div>
<div class="t" style="left:582.50px;top:152.09px;font-size:10.5px;color:#000;transform:scaleX(0.9700);">0.4920</div>
<div class="t" style="left:648.50px;top:152.09px;font-size:10.5px;color:#000;transform:scaleX(0.9700);">0.4970</div>
<div class="t" style="left:728.50px;top:152.09px;font-size:10.5px;color:#000;transform:scaleX(0.9700);">0.4920</div>
<div class="t" style="left:803.50px;top:152.09px;font-size:10.5px;color:#000;transform:scaleX(0.9700);">0.4945</div>
<div class="t" style="left:902.50px;top:152.09px;font-size:10.5px;color:#000;transform:scaleX(0.9700);">2504</div>
<div class="t" style="left:950.50px;top:152.09px;font-size:10.5px;color:#000;transform:scaleX(0.9500);">Alice</div>
<div class="t" style="left:2.60px;top:167.07px;font-size:10.5px;color:#000;transform:scaleX(0.9700);">68</div>
<div class="t" style="left:24.50px;top:167.07px;font-size:10.5px;color:#000;transform:scaleX(0.9700);">2779</div>
<div class="t" style="left:77.50px;top:167.07px;font-size:10.5px;color:#000;transform:scaleX(0.9700);">1.726</div>
<div class="t" style="left:154.50px;top:167.07px;font-size:10.5px;color:#000;transform:scaleX(0.9700);">0.2131</div>
<div class="t" style="left:222.50px;top:167.07px;font-size:10.5px;color:#000;transform:scaleX(0.9700);">1.5127</div>
<div class="t" style="left:288.50px;top:167.07px;font-size:10.5px;color:#000;transform:scaleX(0.9700);">0.2963</div>
<div class="t" style="left:370.50px;top:167.07px;font-size:10.5px;color:#000;transform:scaleX(0.9700);">0.3034</div>
<div class="t" style="left:449.50px;top:167.07px;font-size:10.5px;color:#000;transform:scaleX(0.9700);">0.4972</div>
<div class="t" style="left:515.50px;top:167.07px;font-size:10.5px;color:#000;transform:scaleX(0.9700);">0.4937</div>
<div class="t" style="left:582.50px;top:167.07px;font-size:10.5px;color:#000;transform:scaleX(0.9700);">0.4961</div>
<div class="t" style="left:648.50px;top:167.07px;font-size:10.5px;color:#000;transform:scaleX(0.9700);">0.4972</div>
<div class="t" style="left:728.50px;top:167.07px;font-size:10.5px;color:#000;transform:scaleX(0.9700);">0.4937</div>
<div class="t" style="left:803.50px;top:167.07px;font-size:10.5px;color:#000;transform:scaleX(0.9700);">0.4957</div>
<div class="t" style="left:902.50px;top:167.07px;font-size:10.5px;color:#000;transform:scaleX(0.9700);">2503</div>
<div class="t" style="left:950.50px;top:167.07px;font-size:10.5px;color:#000;transform:scaleX(0.9500);">Alice</div>
<div class="t" style="left:2.60px;top:182.05px;font-size:10.5px;color:#000;transform:scaleX(0.9700);">69</div>
<div class="t" style="left:24.50px;top:182.05px;font-size:10.5px;color:#000;transform:scaleX(0.9700);">2780</div>
<div class="t" style="left:77.50px;top:182.05px;font-size:10.5px;color:#000;transform:scaleX(0.9700);">1.733</div>
<div class="t" style="left:154.50px;top:182.05px;font-size:10.5px;color:#000;transform:scaleX(0.9700);">0.2031</div>
<div class="t" style="left:222.50px;top:182.05px;font-size:10.5px;color:#000;transform:scaleX(0.9700);">1.5294</div>
<div class="t" style="left:288.50px;top:182.05px;font-size:10.5px;color:#000;transform:scaleX(0.9700);">0.3019</div>
<div class="t" style="left:370.50px;top:182.05px;font-size:10.5px;color:#000;transform:scaleX(0.9700);">0.3060</div>
<div class="t" style="left:449.50px;top:182.05px;font-size:10.5px;color:#000;transform:scaleX(0.9700);">0.4965</div>
<div class="t" style="left:515.50px;top:182.05px;font-size:10.5px;color:#000;transform:scaleX(0.9700);">0.4945</div>
<div class="t" style="left:582.50px;top:182.05px;font-size:10.5px;color:#000;transform:scaleX(0.9700);">0.4936</div>
<div class="t" style="left:648.50px;top:182.05px;font-size:10.5px;color:#000;transform:scaleX(0.9700);">0.4965</div>
<div class="t" style="left:728.50px;top:182.05px;font-size:10.5px;color:#000;transform:scaleX(0.9700);">0.4936</div>
<div class="t" style="left:803.50px;top:182.05px;font-size:10.5px;color:#000;transform:scaleX(0.9700);">0.4949</div>
<div class="t" style="left:902.50px;top:182.05px;font-size:10.5px;color:#000;transform:scaleX(0.9700);">2505</div>
<div class="t" style="left:950.50px;top:182.05px;font-size:10.5px;color:#000;transform:scaleX(0.9500);">Joe</div>
<div class="t" style="left:2.60px;top:197.03px;font-size:10.5px;color:#000;transform:scaleX(0.9700);">70</div>
<div class="t" style="left:24.50px;top:197.03px;font-size:10.5px;color:#000;transform:scaleX(0.9700);">2781</div>
<div class="t" style="left:77.50px;top:197.03px;font-size:10.5px;color:#000;transform:scaleX(0.9700);">1.720</div>
<div class="t" style="left:154.50px;top:197.03px;font-size:10.5px;color:#000;transform:scaleX(0.9700);">0.2042</div>
<div class="t" style="left:222.50px;top:197.03px;font-size:10.5px;color:#000;transform:scaleX(0.9700);">1.5162</div>
<div class="t" style="left:288.50px;top:197.03px;font-size:10.5px;color:#000;transform:scaleX(0.9700);">0.3013</div>
<div class="t" style="left:370.50px;top:197.03px;font-size:10.5px;color:#000;transform:scaleX(0.9700);">0.3042</div>
<div class="t" style="left:449.50px;top:197.03px;font-size:10.5px;color:#000;transform:scaleX(0.9700);">0.4962</div>
<div class="t" style="left:515.50px;top:197.03px;font-size:10.5px;color:#000;transform:scaleX(0.9700);">0.4915</div>
<div class="t" style="left:582.50px;top:197.03px;font-size:10.5px;color:#000;transform:scaleX(0.9700);">0.4934</div>
<div class="t" style="left:648.50px;top:197.03px;font-size:10.5px;color:#000;transform:scaleX(0.9700);">0.4962</div>
<div class="t" style="left:728.50px;top:197.03px;font-size:10.5px;color:#000;transform:scaleX(0.9700);">0.4915</div>
<div class="t" style="left:803.50px;top:197.03px;font-size:10.5px;color:#000;transform:scaleX(0.9700);">0.4937</div>
<div class="t" style="left:902.50px;top:197.03px;font-size:10.5px;color:#000;transform:scaleX(0.9700);">2506</div>
<div class="t" style="left:950.50px;top:197.03px;font-size:10.5px;color:#000;transform:scaleX(0.9500);">Alice</div>
<div class="t" style="left:2.60px;top:212.01px;font-size:10.5px;color:#000;transform:scaleX(0.9700);">71</div>
<div class="t" style="left:24.50px;top:212.01px;font-size:10.5px;color:#000;transform:scaleX(0.9700);">2782</div>
<div class="t" style="left:77.50px;top:212.01px;font-size:10.5px;color:#000;transform:scaleX(0.9700);">1.721</div>
<div class="t" style="left:154.50px;top:212.01px;font-size:10.5px;color:#000;transform:scaleX(0.9700);">0.2089</div>
<div class="t" style="left:222.50px;top:212.01px;font-size:10.5px;color:#000;transform:scaleX(0.9700);">1.5123</div>
<div class="t" style="left:288.50px;top:212.01px;font-size:10.5px;color:#000;transform:scaleX(0.9700);">0.2967</div>
<div class="t" style="left:370.50px;top:212.01px;font-size:10.5px;color:#000;transform:scaleX(0.9700);">0.3054</div>
<div class="t" style="left:449.50px;top:212.01px;font-size:10.5px;color:#000;transform:scaleX(0.9700);">0.4944</div>
<div class="t" style="left:515.50px;top:212.01px;font-size:10.5px;color:#000;transform:scaleX(0.9700);">0.4990</div>
<div class="t" style="left:582.50px;top:212.01px;font-size:10.5px;color:#000;transform:scaleX(0.9700);">0.4983</div>
<div class="t" style="left:648.50px;top:212.01px;font-size:10.5px;color:#000;transform:scaleX(0.9700);">0.4990</div>
<div class="t" style="left:728.50px;top:212.01px;font-size:10.5px;color:#000;transform:scaleX(0.9700);">0.4944</div>
<div class="t" style="left:803.50px;top:212.01px;font-size:10.5px;color:#000;transform:scaleX(0.9700);">0.4972</div>
<div class="t" style="left:902.50px;top:212.01px;font-size:10.5px;color:#000;transform:scaleX(0.9700);">2505</div>
<div class="t" style="left:950.50px;top:212.01px;font-size:10.5px;color:#000;transform:scaleX(0.9500);">Alice</div>
<div class="t" style="left:2.60px;top:226.99px;font-size:10.5px;color:#000;transform:scaleX(0.9700);">72</div>
<div class="t" style="left:24.50px;top:226.99px;font-size:10.5px;color:#000;transform:scaleX(0.9700);">2783</div>
<div class="t" style="left:77.50px;top:226.99px;font-size:10.5px;color:#000;transform:scaleX(0.9700);">1.728</div>
<div class="t" style="left:154.50px;top:226.99px;font-size:10.5px;color:#000;transform:scaleX(0.9700);">0.2078</div>
<div class="t" style="left:222.50px;top:226.99px;font-size:10.5px;color:#000;transform:scaleX(0.9700);">1.5205</div>
<div class="t" style="left:288.50px;top:226.99px;font-size:10.5px;color:#000;transform:scaleX(0.9700);">0.2960</div>
<div class="t" style="left:370.50px;top:226.99px;font-size:10.5px;color:#000;transform:scaleX(0.9700);">0.3040</div>
<div class="t" style="left:449.50px;top:226.99px;font-size:10.5px;color:#000;transform:scaleX(0.9700);">0.4958</div>
<div class="t" style="left:515.50px;top:226.99px;font-size:10.5px;color:#000;transform:scaleX(0.9700);">0.4947</div>
<div class="t" style="left:582.50px;top:226.99px;font-size:10.5px;color:#000;transform:scaleX(0.9700);">0.4946</div>
<div class="t" style="left:648.50px;top:226.99px;font-size:10.5px;color:#000;transform:scaleX(0.9700);">0.4958</div>
<div class="t" style="left:728.50px;top:226.99px;font-size:10.5px;color:#000;transform:scaleX(0.9700);">0.4946</div>
<div class="t" style="left:803.50px;top:226.99px;font-size:10.5px;color:#000;transform:scaleX(0.9700);">0.4950</div>
<div class="t" style="left:902.50px;top:226.99px;font-size:10.5px;color:#000;transform:scaleX(0.9700);">2505</div>
<div class="t" style="left:950.50px;top:226.99px;font-size:10.5px;color:#000;transform:scaleX(0.9500);">Ted</div>
<div class="t" style="left:2.60px;top:241.98px;font-size:10.5px;color:#000;transform:scaleX(0.9700);">73</div>
<div class="t" style="left:24.50px;top:241.98px;font-size:10.5px;color:#000;transform:scaleX(0.9700);">2784</div>
<div class="t" style="left:77.50px;top:241.98px;font-size:10.5px;color:#000;transform:scaleX(0.9700);">1.714</div>
<div class="t" style="left:154.50px;top:241.98px;font-size:10.5px;color:#000;transform:scaleX(0.9700);">0.2025</div>
<div class="t" style="left:222.50px;top:241.98px;font-size:10.5px;color:#000;transform:scaleX(0.9700);">1.5119</div>
<div class="t" style="left:288.50px;top:241.98px;font-size:10.5px;color:#000;transform:scaleX(0.9700);">0.2989</div>
<div class="t" style="left:370.50px;top:241.98px;font-size:10.5px;color:#000;transform:scaleX(0.9700);">0.3056</div>
<div class="t" style="left:449.50px;top:241.98px;font-size:10.5px;color:#000;transform:scaleX(0.9700);">0.4952</div>
<div class="t" style="left:515.50px;top:241.98px;font-size:10.5px;color:#000;transform:scaleX(0.9700);">0.4962</div>
<div class="t" style="left:582.50px;top:241.98px;font-size:10.5px;color:#000;transform:scaleX(0.9700);">0.4923</div>
<div class="t" style="left:648.50px;top:241.98px;font-size:10.5px;color:#000;transform:scaleX(0.9700);">0.4962</div>
<div class="t" style="left:728.50px;top:241.98px;font-size:10.5px;color:#000;transform:scaleX(0.9700);">0.4923</div>
<div class="t" style="left:803.50px;top:241.98px;font-size:10.5px;color:#000;transform:scaleX(0.9700);">0.4946</div>
<div class="t" style="left:902.50px;top:241.98px;font-size:10.5px;color:#000;transform:scaleX(0.9700);">2501</div>
<div class="t" style="left:950.50px;top:241.98px;font-size:10.5px;color:#000;transform:scaleX(0.9500);">Alice</div>
<div class="t" style="left:2.60px;top:256.95px;font-size:10.5px;color:#000;transform:scaleX(0.9700);">74</div>
<div class="t" style="left:24.50px;top:256.95px;font-size:10.5px;color:#000;transform:scaleX(0.9700);">2785</div>
<div class="t" style="left:77.50px;top:256.95px;font-size:10.5px;color:#000;transform:scaleX(0.9700);">1.730</div>
<div class="t" style="left:154.50px;top:256.95px;font-size:10.5px;color:#000;transform:scaleX(0.9700);">0.2009</div>
<div class="t" style="left:222.50px;top:256.95px;font-size:10.5px;color:#000;transform:scaleX(0.9700);">1.5286</div>
<div class="t" style="left:288.50px;top:256.95px;font-size:10.5px;color:#000;transform:scaleX(0.9700);">0.3022</div>
<div class="t" style="left:370.50px;top:256.95px;font-size:10.5px;color:#000;transform:scaleX(0.9700);">0.3045</div>
<div class="t" style="left:449.50px;top:256.95px;font-size:10.5px;color:#000;transform:scaleX(0.9700);">0.4962</div>
<div class="t" style="left:515.50px;top:256.95px;font-size:10.5px;color:#000;transform:scaleX(0.9700);">0.4949</div>
<div class="t" style="left:582.50px;top:256.95px;font-size:10.5px;color:#000;transform:scaleX(0.9700);">0.4943</div>
<div class="t" style="left:648.50px;top:256.95px;font-size:10.5px;color:#000;transform:scaleX(0.9700);">0.4962</div>
<div class="t" style="left:728.50px;top:256.95px;font-size:10.5px;color:#000;transform:scaleX(0.9700);">0.4943</div>
<div class="t" style="left:803.50px;top:256.95px;font-size:10.5px;color:#000;transform:scaleX(0.9700);">0.4951</div>
<div class="t" style="left:902.50px;top:256.95px;font-size:10.5px;color:#000;transform:scaleX(0.9700);">2503</div>
<div class="t" style="left:950.50px;top:256.95px;font-size:10.5px;color:#000;transform:scaleX(0.9500);">Alice</div>
<div class="t" style="left:2.60px;top:271.94px;font-size:10.5px;color:#000;transform:scaleX(0.9700);">75</div>
<div class="t" style="left:24.50px;top:271.94px;font-size:10.5px;color:#000;transform:scaleX(0.9700);">2786</div>
<div class="t" style="left:77.50px;top:271.94px;font-size:10.5px;color:#000;transform:scaleX(0.9700);">1.734</div>
<div class="t" style="left:154.50px;top:271.94px;font-size:10.5px;color:#000;transform:scaleX(0.9700);">0.2070</div>
<div class="t" style="left:222.50px;top:271.94px;font-size:10.5px;color:#000;transform:scaleX(0.9700);">1.5271</div>
<div class="t" style="left:288.50px;top:271.94px;font-size:10.5px;color:#000;transform:scaleX(0.9700);">0.2993</div>
<div class="t" style="left:370.50px;top:271.94px;font-size:10.5px;color:#000;transform:scaleX(0.9700);">0.3063</div>
<div class="t" style="left:449.50px;top:271.94px;font-size:10.5px;color:#000;transform:scaleX(0.9700);">0.4945</div>
<div class="t" style="left:515.50px;top:271.94px;font-size:10.5px;color:#000;transform:scaleX(0.9700);">0.4942</div>
<div class="t" style="left:582.50px;top:271.94px;font-size:10.5px;color:#000;transform:scaleX(0.9700);">0.4952</div>
<div class="t" style="left:648.50px;top:271.94px;font-size:10.5px;color:#000;transform:scaleX(0.9700);">0.4952</div>
<div class="t" style="left:728.50px;top:271.94px;font-size:10.5px;color:#000;transform:scaleX(0.9700);">0.4942</div>
<div class="t" style="left:803.50px;top:271.94px;font-size:10.5px;color:#000;transform:scaleX(0.9700);">0.4947</div>
<div class="t" style="left:902.50px;top:271.94px;font-size:10.5px;color:#000;transform:scaleX(0.9700);">2502</div>
<div class="t" style="left:950.50px;top:271.94px;font-size:10.5px;color:#000;transform:scaleX(0.9500);">Ted</div>
<div class="t" style="left:2.60px;top:286.92px;font-size:10.5px;color:#000;transform:scaleX(0.9700);">76</div>
<div class="t" style="left:24.50px;top:286.92px;font-size:10.5px;color:#000;transform:scaleX(0.9700);">2787</div>
<div class="t" style="left:77.50px;top:286.92px;font-size:10.5px;color:#000;transform:scaleX(0.9700);">1.718</div>
<div class="t" style="left:154.50px;top:286.92px;font-size:10.5px;color:#000;transform:scaleX(0.9700);">0.2145</div>
<div class="t" style="left:222.50px;top:286.92px;font-size:10.5px;color:#e0202a;transform:scaleX(0.9700);">1.5031</div>
<div class="t" style="left:288.50px;top:286.92px;font-size:10.5px;color:#000;transform:scaleX(0.9700);">0.3018</div>
<div class="t" style="left:370.50px;top:286.92px;font-size:10.5px;color:#000;transform:scaleX(0.9700);">0.3041</div>
<div class="t" style="left:449.50px;top:286.92px;font-size:10.5px;color:#000;transform:scaleX(0.9700);">0.4983</div>
<div class="t" style="left:515.50px;top:286.92px;font-size:10.5px;color:#000;transform:scaleX(0.9700);">0.4952</div>
<div class="t" style="left:582.50px;top:286.92px;font-size:10.5px;color:#000;transform:scaleX(0.9700);">0.4974</div>
<div class="t" style="left:648.50px;top:286.92px;font-size:10.5px;color:#000;transform:scaleX(0.9700);">0.4983</div>
<div class="t" style="left:728.50px;top:286.92px;font-size:10.5px;color:#000;transform:scaleX(0.9700);">0.4952</div>
<div class="t" style="left:803.50px;top:286.92px;font-size:10.5px;color:#000;transform:scaleX(0.9700);">0.4970</div>
<div class="t" style="left:902.50px;top:286.92px;font-size:10.5px;color:#000;transform:scaleX(0.9700);">2501</div>
<div class="t" style="left:950.50px;top:286.92px;font-size:10.5px;color:#000;transform:scaleX(0.9500);">Ted</div>
<div class="t" style="left:2.60px;top:301.89px;font-size:10.5px;color:#000;transform:scaleX(0.9700);">77</div>
<div class="t" style="left:24.50px;top:301.89px;font-size:10.5px;color:#000;transform:scaleX(0.9700);">2788</div>
<div class="t" style="left:77.50px;top:301.89px;font-size:10.5px;color:#000;transform:scaleX(0.9700);">1.718</div>
<div class="t" style="left:154.50px;top:301.89px;font-size:10.5px;color:#000;transform:scaleX(0.9700);">0.2094</div>
<div class="t" style="left:222.50px;top:301.89px;font-size:10.5px;color:#000;transform:scaleX(0.9700);">1.5081</div>
<div class="t" style="left:288.50px;top:301.89px;font-size:10.5px;color:#000;transform:scaleX(0.9700);">0.3035</div>
<div class="t" style="left:370.50px;top:301.89px;font-size:10.5px;color:#000;transform:scaleX(0.9700);">0.3050</div>
<div class="t" style="left:449.50px;top:301.89px;font-size:10.5px;color:#000;transform:scaleX(0.9700);">0.4923</div>
<div class="t" style="left:515.50px;top:301.89px;font-size:10.5px;color:#000;transform:scaleX(0.9700);">0.4960</div>
<div class="t" style="left:582.50px;top:301.89px;font-size:10.5px;color:#000;transform:scaleX(0.9700);">0.4948</div>
<div class="t" style="left:648.50px;top:301.89px;font-size:10.5px;color:#000;transform:scaleX(0.9700);">0.4960</div>
<div class="t" style="left:728.50px;top:301.89px;font-size:10.5px;color:#000;transform:scaleX(0.9700);">0.4923</div>
<div class="t" style="left:803.50px;top:301.89px;font-size:10.5px;color:#000;transform:scaleX(0.9700);">0.4944</div>
<div class="t" style="left:902.50px;top:301.89px;font-size:10.5px;color:#000;transform:scaleX(0.9700);">2507</div>
<div class="t" style="left:950.50px;top:301.89px;font-size:10.5px;color:#000;transform:scaleX(0.9500);">Joe</div>
<div class="t" style="left:2.60px;top:316.88px;font-size:10.5px;color:#000;transform:scaleX(0.9700);">78</div>
<div class="t" style="left:24.50px;top:316.88px;font-size:10.5px;color:#000;transform:scaleX(0.9700);">2789</div>
<div class="t" style="left:77.50px;top:316.88px;font-size:10.5px;color:#000;transform:scaleX(0.9700);">1.730</div>
<div class="t" style="left:154.50px;top:316.88px;font-size:10.5px;color:#000;transform:scaleX(0.9700);">0.1956</div>
<div class="t" style="left:222.50px;top:316.88px;font-size:10.5px;color:#000;transform:scaleX(0.9700);">1.5341</div>
<div class="t" style="left:288.50px;top:316.88px;font-size:10.5px;color:#000;transform:scaleX(0.9700);">0.2990</div>
<div class="t" style="left:370.50px;top:316.88px;font-size:10.5px;color:#000;transform:scaleX(0.9700);">0.3052</div>
<div class="t" style="left:449.50px;top:316.88px;font-size:10.5px;color:#000;transform:scaleX(0.9700);">0.4952</div>
<div class="t" style="left:515.50px;top:316.88px;font-size:10.5px;color:#000;transform:scaleX(0.9700);">0.4929</div>
<div class="t" style="left:582.50px;top:316.88px;font-size:10.5px;color:#000;transform:scaleX(0.9700);">0.4950</div>
<div class="t" style="left:648.50px;top:316.88px;font-size:10.5px;color:#000;transform:scaleX(0.9700);">0.4952</div>
<div class="t" style="left:728.50px;top:316.88px;font-size:10.5px;color:#000;transform:scaleX(0.9700);">0.4929</div>
<div class="t" style="left:803.50px;top:316.88px;font-size:10.5px;color:#000;transform:scaleX(0.9700);">0.4944</div>
<div class="t" style="left:902.50px;top:316.88px;font-size:10.5px;color:#000;transform:scaleX(0.9700);">2501</div>
<div class="t" style="left:950.50px;top:316.88px;font-size:10.5px;color:#000;transform:scaleX(0.9500);">Joe</div>
<div class="t" style="left:2.60px;top:331.85px;font-size:10.5px;color:#000;transform:scaleX(0.9700);">79</div>
<div class="t" style="left:24.50px;top:331.85px;font-size:10.5px;color:#000;transform:scaleX(0.9700);">2790</div>
<div class="t" style="left:77.50px;top:331.85px;font-size:10.5px;color:#000;transform:scaleX(0.9700);">1.735</div>
<div class="t" style="left:154.50px;top:331.85px;font-size:10.5px;color:#000;transform:scaleX(0.9700);">0.1974</div>
<div class="t" style="left:222.50px;top:331.85px;font-size:10.5px;color:#e0202a;transform:scaleX(0.9700);">1.5373</div>
<div class="t" style="left:288.50px;top:331.85px;font-size:10.5px;color:#000;transform:scaleX(0.9700);">0.2972</div>
<div class="t" style="left:370.50px;top:331.85px;font-size:10.5px;color:#000;transform:scaleX(0.9700);">0.3070</div>
<div class="t" style="left:449.50px;top:331.85px;font-size:10.5px;color:#000;transform:scaleX(0.9700);">0.4953</div>
<div class="t" style="left:515.50px;top:331.85px;font-size:10.5px;color:#000;transform:scaleX(0.9700);">0.4936</div>
<div class="t" style="left:582.50px;top:331.85px;font-size:10.5px;color:#000;transform:scaleX(0.9700);">0.4957</div>
<div class="t" style="left:648.50px;top:331.85px;font-size:10.5px;color:#000;transform:scaleX(0.9700);">0.4957</div>
<div class="t" style="left:728.50px;top:331.85px;font-size:10.5px;color:#000;transform:scaleX(0.9700);">0.4936</div>
<div class="t" style="left:803.50px;top:331.85px;font-size:10.5px;color:#000;transform:scaleX(0.9700);">0.4949</div>
<div class="t" style="left:902.50px;top:331.85px;font-size:10.5px;color:#000;transform:scaleX(0.9700);">2503</div>
<div class="t" style="left:950.50px;top:331.85px;font-size:10.5px;color:#000;transform:scaleX(0.9500);">Alice</div>
<div class="t" style="left:2.60px;top:346.83px;font-size:10.5px;color:#000;transform:scaleX(0.9700);">80</div>
<div class="t" style="left:24.50px;top:346.83px;font-size:10.5px;color:#000;transform:scaleX(0.9700);">2791</div>
<div class="t" style="left:77.50px;top:346.83px;font-size:10.5px;color:#000;transform:scaleX(0.9700);">1.727</div>
<div class="t" style="left:154.50px;top:346.83px;font-size:10.5px;color:#000;transform:scaleX(0.9700);">0.1998</div>
<div class="t" style="left:222.50px;top:346.83px;font-size:10.5px;color:#000;transform:scaleX(0.9700);">1.5269</div>
<div class="t" style="left:288.50px;top:346.83px;font-size:10.5px;color:#000;transform:scaleX(0.9700);">0.2988</div>
<div class="t" style="left:370.50px;top:346.83px;font-size:10.5px;color:#000;transform:scaleX(0.9700);">0.3059</div>
<div class="t" style="left:449.50px;top:346.83px;font-size:10.5px;color:#000;transform:scaleX(0.9700);">0.4964</div>
<div class="t" style="left:515.50px;top:346.83px;font-size:10.5px;color:#000;transform:scaleX(0.9700);">0.4912</div>
<div class="t" style="left:582.50px;top:346.83px;font-size:10.5px;color:#000;transform:scaleX(0.9700);">0.4938</div>
<div class="t" style="left:648.50px;top:346.83px;font-size:10.5px;color:#000;transform:scaleX(0.9700);">0.4964</div>
<div class="t" style="left:728.50px;top:346.83px;font-size:10.5px;color:#000;transform:scaleX(0.9700);">0.4912</div>
<div class="t" style="left:803.50px;top:346.83px;font-size:10.5px;color:#000;transform:scaleX(0.9700);">0.4938</div>
<div class="t" style="left:902.50px;top:346.83px;font-size:10.5px;color:#000;transform:scaleX(0.9700);">2507</div>
<div class="t" style="left:950.50px;top:346.83px;font-size:10.5px;color:#000;transform:scaleX(0.9500);">Joe</div>
<div class="t" style="left:2.60px;top:361.81px;font-size:10.5px;color:#000;transform:scaleX(0.9700);">81</div>
<div class="t" style="left:24.50px;top:361.81px;font-size:10.5px;color:#000;transform:scaleX(0.9700);">2792</div>
<div class="t" style="left:77.50px;top:361.81px;font-size:10.5px;color:#000;transform:scaleX(0.9700);">1.739</div>
<div class="t" style="left:154.50px;top:361.81px;font-size:10.5px;color:#000;transform:scaleX(0.9700);">0.2019</div>
<div class="t" style="left:222.50px;top:361.81px;font-size:10.5px;color:#e0202a;transform:scaleX(0.9700);">1.5371</div>
<div class="t" style="left:288.50px;top:361.81px;font-size:10.5px;color:#000;transform:scaleX(0.9700);">0.2971</div>
<div class="t" style="left:370.50px;top:361.81px;font-size:10.5px;color:#000;transform:scaleX(0.9700);">0.3048</div>
<div class="t" style="left:449.50px;top:361.81px;font-size:10.5px;color:#000;transform:scaleX(0.9700);">0.4959</div>
<div class="t" style="left:515.50px;top:361.81px;font-size:10.5px;color:#000;transform:scaleX(0.9700);">0.4947</div>
<div class="t" style="left:582.50px;top:361.81px;font-size:10.5px;color:#000;transform:scaleX(0.9700);">0.4982</div>
<div class="t" style="left:648.50px;top:361.81px;font-size:10.5px;color:#000;transform:scaleX(0.9700);">0.4982</div>
<div class="t" style="left:728.50px;top:361.81px;font-size:10.5px;color:#000;transform:scaleX(0.9700);">0.4947</div>
<div class="t" style="left:803.50px;top:361.81px;font-size:10.5px;color:#000;transform:scaleX(0.9700);">0.4963</div>
<div class="t" style="left:902.50px;top:361.81px;font-size:10.5px;color:#000;transform:scaleX(0.9700);">2505</div>
<div class="t" style="left:950.50px;top:361.81px;font-size:10.5px;color:#000;transform:scaleX(0.9500);">Ted</div>
<div class="t" style="left:2.60px;top:376.79px;font-size:10.5px;color:#000;transform:scaleX(0.9700);">82</div>
<div class="t" style="left:24.50px;top:376.79px;font-size:10.5px;color:#000;transform:scaleX(0.9700);">2793</div>
<div class="t" style="left:77.50px;top:376.79px;font-size:10.5px;color:#000;transform:scaleX(0.9700);">1.721</div>
<div class="t" style="left:154.50px;top:376.79px;font-size:10.5px;color:#000;transform:scaleX(0.9700);">0.2045</div>
<div class="t" style="left:222.50px;top:376.79px;font-size:10.5px;color:#000;transform:scaleX(0.9700);">1.5166</div>
<div class="t" style="left:288.50px;top:376.79px;font-size:10.5px;color:#000;transform:scaleX(0.9700);">0.2986</div>
<div class="t" style="left:370.50px;top:376.79px;font-size:10.5px;color:#000;transform:scaleX(0.9700);">0.3043</div>
<div class="t" style="left:449.50px;top:376.79px;font-size:10.5px;color:#000;transform:scaleX(0.9700);">0.4959</div>
<div class="t" style="left:515.50px;top:376.79px;font-size:10.5px;color:#000;transform:scaleX(0.9700);">0.4940</div>
<div class="t" style="left:582.50px;top:376.79px;font-size:10.5px;color:#000;transform:scaleX(0.9700);">0.4930</div>
<div class="t" style="left:648.50px;top:376.79px;font-size:10.5px;color:#000;transform:scaleX(0.9700);">0.4959</div>
<div class="t" style="left:728.50px;top:376.79px;font-size:10.5px;color:#000;transform:scaleX(0.9700);">0.4930</div>
<div class="t" style="left:803.50px;top:376.79px;font-size:10.5px;color:#000;transform:scaleX(0.9700);">0.4943</div>
<div class="t" style="left:902.50px;top:376.79px;font-size:10.5px;color:#000;transform:scaleX(0.9700);">2506</div>
<div class="t" style="left:950.50px;top:376.79px;font-size:10.5px;color:#000;transform:scaleX(0.9500);">Alice</div>
<div class="t" style="left:2.60px;top:391.78px;font-size:10.5px;color:#000;transform:scaleX(0.9700);">83</div>
<div class="t" style="left:24.50px;top:391.78px;font-size:10.5px;color:#000;transform:scaleX(0.9700);">2794</div>
<div class="t" style="left:77.50px;top:391.78px;font-size:10.5px;color:#000;transform:scaleX(0.9700);">1.723</div>
<div class="t" style="left:154.50px;top:391.78px;font-size:10.5px;color:#000;transform:scaleX(0.9700);">0.2127</div>
<div class="t" style="left:222.50px;top:391.78px;font-size:10.5px;color:#000;transform:scaleX(0.9700);">1.5099</div>
<div class="t" style="left:288.50px;top:391.78px;font-size:10.5px;color:#000;transform:scaleX(0.9700);">0.3005</div>
<div class="t" style="left:370.50px;top:391.78px;font-size:10.5px;color:#000;transform:scaleX(0.9700);">0.3053</div>
<div class="t" style="left:449.50px;top:391.78px;font-size:10.5px;color:#000;transform:scaleX(0.9700);">0.4953</div>
<div class="t" style="left:515.50px;top:391.78px;font-size:10.5px;color:#000;transform:scaleX(0.9700);">0.4970</div>
<div class="t" style="left:582.50px;top:391.78px;font-size:10.5px;color:#000;transform:scaleX(0.9700);">0.4964</div>
<div class="t" style="left:648.50px;top:391.78px;font-size:10.5px;color:#000;transform:scaleX(0.9700);">0.4970</div>
<div class="t" style="left:728.50px;top:391.78px;font-size:10.5px;color:#000;transform:scaleX(0.9700);">0.4953</div>
<div class="t" style="left:803.50px;top:391.78px;font-size:10.5px;color:#000;transform:scaleX(0.9700);">0.4963</div>
<div class="t" style="left:902.50px;top:391.78px;font-size:10.5px;color:#000;transform:scaleX(0.9700);">2502</div>
<div class="t" style="left:950.50px;top:391.78px;font-size:10.5px;color:#000;transform:scaleX(0.9500);">Ted</div>
<div class="t" style="left:2.60px;top:406.75px;font-size:10.5px;color:#000;transform:scaleX(0.9700);">84</div>
<div class="t" style="left:24.50px;top:406.75px;font-size:10.5px;color:#000;transform:scaleX(0.9700);">2795</div>
<div class="t" style="left:77.50px;top:406.75px;font-size:10.5px;color:#000;transform:scaleX(0.9700);">1.726</div>
<div class="t" style="left:154.50px;top:406.75px;font-size:10.5px;color:#000;transform:scaleX(0.9700);">0.2117</div>
<div class="t" style="left:222.50px;top:406.75px;font-size:10.5px;color:#000;transform:scaleX(0.9700);">1.5145</div>
<div class="t" style="left:288.50px;top:406.75px;font-size:10.5px;color:#000;transform:scaleX(0.9700);">0.3036</div>
<div class="t" style="left:370.50px;top:406.75px;font-size:10.5px;color:#000;transform:scaleX(0.9700);">0.3044</div>
<div class="t" style="left:449.50px;top:406.75px;font-size:10.5px;color:#000;transform:scaleX(0.9700);">0.4942</div>
<div class="t" style="left:515.50px;top:406.75px;font-size:10.5px;color:#000;transform:scaleX(0.9700);">0.4942</div>
<div class="t" style="left:582.50px;top:406.75px;font-size:10.5px;color:#000;transform:scaleX(0.9700);">0.4957</div>
<div class="t" style="left:648.50px;top:406.75px;font-size:10.5px;color:#000;transform:scaleX(0.9700);">0.4957</div>
<div class="t" style="left:728.50px;top:406.75px;font-size:10.5px;color:#000;transform:scaleX(0.9700);">0.4942</div>
<div class="t" style="left:803.50px;top:406.75px;font-size:10.5px;color:#000;transform:scaleX(0.9700);">0.4947</div>
<div class="t" style="left:902.50px;top:406.75px;font-size:10.5px;color:#000;transform:scaleX(0.9700);">2504</div>
<div class="t" style="left:950.50px;top:406.75px;font-size:10.5px;color:#000;transform:scaleX(0.9500);">Alice</div>
<div class="t" style="left:2.60px;top:421.73px;font-size:10.5px;color:#000;transform:scaleX(0.9700);">85</div>
<div class="t" style="left:24.50px;top:421.73px;font-size:10.5px;color:#000;transform:scaleX(0.9700);">2796</div>
<div class="t" style="left:77.50px;top:421.73px;font-size:10.5px;color:#000;transform:scaleX(0.9700);">1.725</div>
<div class="t" style="left:154.50px;top:421.73px;font-size:10.5px;color:#000;transform:scaleX(0.9700);">0.2044</div>
<div class="t" style="left:222.50px;top:421.73px;font-size:10.5px;color:#000;transform:scaleX(0.9700);">1.5208</div>
<div class="t" style="left:288.50px;top:421.73px;font-size:10.5px;color:#000;transform:scaleX(0.9700);">0.2985</div>
<div class="t" style="left:370.50px;top:421.73px;font-size:10.5px;color:#000;transform:scaleX(0.9700);">0.3070</div>
<div class="t" style="left:449.50px;top:421.73px;font-size:10.5px;color:#000;transform:scaleX(0.9700);">0.4932</div>
<div class="t" style="left:515.50px;top:421.73px;font-size:10.5px;color:#000;transform:scaleX(0.9700);">0.4954</div>
<div class="t" style="left:582.50px;top:421.73px;font-size:10.5px;color:#000;transform:scaleX(0.9700);">0.4955</div>
<div class="t" style="left:648.50px;top:421.73px;font-size:10.5px;color:#000;transform:scaleX(0.9700);">0.4955</div>
<div class="t" style="left:728.50px;top:421.73px;font-size:10.5px;color:#000;transform:scaleX(0.9700);">0.4932</div>
<div class="t" style="left:803.50px;top:421.73px;font-size:10.5px;color:#000;transform:scaleX(0.9700);">0.4947</div>
<div class="t" style="left:902.50px;top:421.73px;font-size:10.5px;color:#000;transform:scaleX(0.9700);">2507</div>
<div class="t" style="left:950.50px;top:421.73px;font-size:10.5px;color:#000;transform:scaleX(0.9500);">Alice</div>
<div class="t" style="left:2.60px;top:436.71px;font-size:10.5px;color:#000;transform:scaleX(0.9700);">86</div>
<div class="t" style="left:24.50px;top:436.71px;font-size:10.5px;color:#000;transform:scaleX(0.9700);">2797</div>
<div class="t" style="left:77.50px;top:436.71px;font-size:10.5px;color:#000;transform:scaleX(0.9700);">1.720</div>
<div class="t" style="left:154.50px;top:436.71px;font-size:10.5px;color:#000;transform:scaleX(0.9700);">0.2023</div>
<div class="t" style="left:222.50px;top:436.71px;font-size:10.5px;color:#000;transform:scaleX(0.9700);">1.5175</div>
<div class="t" style="left:288.50px;top:436.71px;font-size:10.5px;color:#000;transform:scaleX(0.9700);">0.3032</div>
<div class="t" style="left:370.50px;top:436.71px;font-size:10.5px;color:#000;transform:scaleX(0.9700);">0.3076</div>
<div class="t" style="left:449.50px;top:436.71px;font-size:10.5px;color:#000;transform:scaleX(0.9700);">0.4954</div>
<div class="t" style="left:515.50px;top:436.71px;font-size:10.5px;color:#000;transform:scaleX(0.9700);">0.4958</div>
<div class="t" style="left:582.50px;top:436.71px;font-size:10.5px;color:#000;transform:scaleX(0.9700);">0.4954</div>
<div class="t" style="left:648.50px;top:436.71px;font-size:10.5px;color:#000;transform:scaleX(0.9700);">0.4958</div>
<div class="t" style="left:728.50px;top:436.71px;font-size:10.5px;color:#000;transform:scaleX(0.9700);">0.4954</div>
<div class="t" style="left:803.50px;top:436.71px;font-size:10.5px;color:#000;transform:scaleX(0.9700);">0.4955</div>
<div class="t" style="left:902.50px;top:436.71px;font-size:10.5px;color:#000;transform:scaleX(0.9700);">2502</div>
<div class="t" style="left:950.50px;top:436.71px;font-size:10.5px;color:#000;transform:scaleX(0.9500);">Alice</div>
<div class="t" style="left:2.60px;top:451.69px;font-size:10.5px;color:#000;transform:scaleX(0.9700);">87</div>
<div class="t" style="left:24.50px;top:451.69px;font-size:10.5px;color:#000;transform:scaleX(0.9700);">2798</div>
<div class="t" style="left:77.50px;top:451.69px;font-size:10.5px;color:#000;transform:scaleX(0.9700);">1.726</div>
<div class="t" style="left:154.50px;top:451.69px;font-size:10.5px;color:#000;transform:scaleX(0.9700);">0.2020</div>
<div class="t" style="left:222.50px;top:451.69px;font-size:10.5px;color:#000;transform:scaleX(0.9700);">1.5236</div>
<div class="t" style="left:288.50px;top:451.69px;font-size:10.5px;color:#000;transform:scaleX(0.9700);">0.3059</div>
<div class="t" style="left:370.50px;top:451.69px;font-size:10.5px;color:#000;transform:scaleX(0.9700);">0.3052</div>
<div class="t" style="left:449.50px;top:451.69px;font-size:10.5px;color:#000;transform:scaleX(0.9700);">0.4979</div>
<div class="t" style="left:515.50px;top:451.69px;font-size:10.5px;color:#000;transform:scaleX(0.9700);">0.4940</div>
<div class="t" style="left:582.50px;top:451.69px;font-size:10.5px;color:#000;transform:scaleX(0.9700);">0.4940</div>
<div class="t" style="left:648.50px;top:451.69px;font-size:10.5px;color:#000;transform:scaleX(0.9700);">0.4979</div>
<div class="t" style="left:728.50px;top:451.69px;font-size:10.5px;color:#000;transform:scaleX(0.9700);">0.4940</div>
<div class="t" style="left:803.50px;top:451.69px;font-size:10.5px;color:#000;transform:scaleX(0.9700);">0.4953</div>
<div class="t" style="left:902.50px;top:451.69px;font-size:10.5px;color:#000;transform:scaleX(0.9700);">2506</div>
<div class="t" style="left:950.50px;top:451.69px;font-size:10.5px;color:#000;transform:scaleX(0.9500);">Joe</div>
<div class="t" style="left:2.60px;top:466.68px;font-size:10.5px;color:#000;transform:scaleX(0.9700);">88</div>
<div class="t" style="left:24.50px;top:466.68px;font-size:10.5px;color:#000;transform:scaleX(0.9700);">2799</div>
<div class="t" style="left:77.50px;top:466.68px;font-size:10.5px;color:#000;transform:scaleX(0.9700);">1.725</div>
<div class="t" style="left:154.50px;top:466.68px;font-size:10.5px;color:#000;transform:scaleX(0.9700);">0.2067</div>
<div class="t" style="left:222.50px;top:466.68px;font-size:10.5px;color:#000;transform:scaleX(0.9700);">1.5187</div>
<div class="t" style="left:288.50px;top:466.68px;font-size:10.5px;color:#000;transform:scaleX(0.9700);">0.2953</div>
<div class="t" style="left:370.50px;top:466.68px;font-size:10.5px;color:#000;transform:scaleX(0.9700);">0.3067</div>
<div class="t" style="left:449.50px;top:466.68px;font-size:10.5px;color:#000;transform:scaleX(0.9700);">0.4909</div>
<div class="t" style="left:515.50px;top:466.68px;font-size:10.5px;color:#000;transform:scaleX(0.9700);">0.4946</div>
<div class="t" style="left:582.50px;top:466.68px;font-size:10.5px;color:#000;transform:scaleX(0.9700);">0.4970</div>
<div class="t" style="left:648.50px;top:466.68px;font-size:10.5px;color:#000;transform:scaleX(0.9700);">0.4970</div>
<div class="t" style="left:728.50px;top:466.68px;font-size:10.5px;color:#000;transform:scaleX(0.9700);">0.4909</div>
<div class="t" style="left:803.50px;top:466.68px;font-size:10.5px;color:#000;transform:scaleX(0.9700);">0.4941</div>
<div class="t" style="left:902.50px;top:466.68px;font-size:10.5px;color:#000;transform:scaleX(0.9700);">2504</div>
<div class="t" style="left:950.50px;top:466.68px;font-size:10.5px;color:#000;transform:scaleX(0.9500);">Alice</div>
<div class="t" style="left:2.60px;top:481.65px;font-size:10.5px;color:#000;transform:scaleX(0.9700);">89</div>
<div class="t" style="left:24.50px;top:481.65px;font-size:10.5px;color:#000;transform:scaleX(0.9700);">2800</div>
<div class="t" style="left:77.50px;top:481.65px;font-size:10.5px;color:#000;transform:scaleX(0.9700);">1.727</div>
<div class="t" style="left:154.50px;top:481.65px;font-size:10.5px;color:#000;transform:scaleX(0.9700);">0.2054</div>
<div class="t" style="left:222.50px;top:481.65px;font-size:10.5px;color:#000;transform:scaleX(0.9700);">1.5126</div>
<div class="t" style="left:288.50px;top:481.65px;font-size:10.5px;color:#000;transform:scaleX(0.9700);">0.3002</div>
<div class="t" style="left:370.50px;top:481.65px;font-size:10.5px;color:#000;transform:scaleX(0.9700);">0.3052</div>
<div class="t" style="left:449.50px;top:481.65px;font-size:10.5px;color:#000;transform:scaleX(0.9700);">0.4951</div>
<div class="t" style="left:515.50px;top:481.65px;font-size:10.5px;color:#000;transform:scaleX(0.9700);">0.4958</div>
<div class="t" style="left:582.50px;top:481.65px;font-size:10.5px;color:#000;transform:scaleX(0.9700);">0.4948</div>
<div class="t" style="left:648.50px;top:481.65px;font-size:10.5px;color:#000;transform:scaleX(0.9700);">0.4958</div>
<div class="t" style="left:728.50px;top:481.65px;font-size:10.5px;color:#000;transform:scaleX(0.9700);">0.4948</div>
<div class="t" style="left:803.50px;top:481.65px;font-size:10.5px;color:#000;transform:scaleX(0.9700);">0.4952</div>
<div class="t" style="left:902.50px;top:481.65px;font-size:10.5px;color:#000;transform:scaleX(0.9700);">2507</div>
<div class="t" style="left:950.50px;top:481.65px;font-size:10.5px;color:#000;transform:scaleX(0.9500);">Ted</div>
<div class="t" style="left:2.60px;top:496.63px;font-size:10.5px;color:#000;transform:scaleX(0.9700);">90</div>
<div class="t" style="left:24.50px;top:496.63px;font-size:10.5px;color:#000;transform:scaleX(0.9700);">2801</div>
<div class="t" style="left:77.50px;top:496.63px;font-size:10.5px;color:#000;transform:scaleX(0.9700);">1.725</div>
<div class="t" style="left:154.50px;top:496.63px;font-size:10.5px;color:#000;transform:scaleX(0.9700);">0.2045</div>
<div class="t" style="left:222.50px;top:496.63px;font-size:10.5px;color:#000;transform:scaleX(0.9700);">1.5207</div>
<div class="t" style="left:288.50px;top:496.63px;font-size:10.5px;color:#000;transform:scaleX(0.9700);">0.3010</div>
<div class="t" style="left:370.50px;top:496.63px;font-size:10.5px;color:#000;transform:scaleX(0.9700);">0.3055</div>
<div class="t" style="left:449.50px;top:496.63px;font-size:10.5px;color:#000;transform:scaleX(0.9700);">0.4951</div>
<div class="t" style="left:515.50px;top:496.63px;font-size:10.5px;color:#000;transform:scaleX(0.9700);">0.4952</div>
<div class="t" style="left:582.50px;top:496.63px;font-size:10.5px;color:#000;transform:scaleX(0.9700);">0.4953</div>
<div class="t" style="left:648.50px;top:496.63px;font-size:10.5px;color:#000;transform:scaleX(0.9700);">0.4953</div>
<div class="t" style="left:728.50px;top:496.63px;font-size:10.5px;color:#000;transform:scaleX(0.9700);">0.4951</div>
<div class="t" style="left:803.50px;top:496.63px;font-size:10.5px;color:#000;transform:scaleX(0.9700);">0.4952</div>
<div class="t" style="left:902.50px;top:496.63px;font-size:10.5px;color:#000;transform:scaleX(0.9700);">2504</div>
<div class="t" style="left:950.50px;top:496.63px;font-size:10.5px;color:#000;transform:scaleX(0.9500);">Alice</div>
<div class="t" style="left:2.60px;top:511.61px;font-size:10.5px;color:#000;transform:scaleX(0.9700);">91</div>
<div class="t" style="left:24.50px;top:511.61px;font-size:10.5px;color:#000;transform:scaleX(0.9700);">2802</div>
<div class="t" style="left:77.50px;top:511.61px;font-size:10.5px;color:#000;transform:scaleX(0.9700);">1.730</div>
<div class="t" style="left:154.50px;top:511.61px;font-size:10.5px;color:#000;transform:scaleX(0.9700);">0.2005</div>
<div class="t" style="left:222.50px;top:511.61px;font-size:10.5px;color:#000;transform:scaleX(0.9700);">1.5295</div>
<div class="t" style="left:288.50px;top:511.61px;font-size:10.5px;color:#000;transform:scaleX(0.9700);">0.3060</div>
<div class="t" style="left:370.50px;top:511.61px;font-size:10.5px;color:#000;transform:scaleX(0.9700);">0.3030</div>
<div class="t" style="left:449.50px;top:511.61px;font-size:10.5px;color:#000;transform:scaleX(0.9700);">0.4940</div>
<div class="t" style="left:515.50px;top:511.61px;font-size:10.5px;color:#000;transform:scaleX(0.9700);">0.4915</div>
<div class="t" style="left:582.50px;top:511.61px;font-size:10.5px;color:#000;transform:scaleX(0.9700);">0.4905</div>
<div class="t" style="left:648.50px;top:511.61px;font-size:10.5px;color:#000;transform:scaleX(0.9700);">0.4940</div>
<div class="t" style="left:728.50px;top:511.61px;font-size:10.5px;color:#000;transform:scaleX(0.9700);">0.4905</div>
<div class="t" style="left:803.50px;top:511.61px;font-size:10.5px;color:#000;transform:scaleX(0.9700);">0.4920</div>
<div class="t" style="left:902.50px;top:511.61px;font-size:10.5px;color:#000;transform:scaleX(0.9700);">2502</div>
<div class="t" style="left:950.50px;top:511.61px;font-size:10.5px;color:#000;transform:scaleX(0.9500);">Ted</div>
<div class="t" style="left:2.60px;top:526.60px;font-size:10.5px;color:#000;transform:scaleX(0.9700);">92</div>
<div class="t" style="left:24.50px;top:526.60px;font-size:10.5px;color:#000;transform:scaleX(0.9700);">2803</div>
<div class="t" style="left:77.50px;top:526.60px;font-size:10.5px;color:#000;transform:scaleX(0.9700);">1.724</div>
<div class="t" style="left:154.50px;top:526.60px;font-size:10.5px;color:#000;transform:scaleX(0.9700);">0.2015</div>
<div class="t" style="left:222.50px;top:526.60px;font-size:10.5px;color:#000;transform:scaleX(0.9700);">1.5220</div>
<div class="t" style="left:288.50px;top:526.60px;font-size:10.5px;color:#000;transform:scaleX(0.9700);">0.3050</div>
<div class="t" style="left:370.50px;top:526.60px;font-size:10.5px;color:#000;transform:scaleX(0.9700);">0.3015</div>
<div class="t" style="left:449.50px;top:526.60px;font-size:10.5px;color:#000;transform:scaleX(0.9700);">0.4910</div>
<div class="t" style="left:515.50px;top:526.60px;font-size:10.5px;color:#000;transform:scaleX(0.9700);">0.4910</div>
<div class="t" style="left:582.50px;top:526.60px;font-size:10.5px;color:#000;transform:scaleX(0.9700);">0.4905</div>
<div class="t" style="left:648.50px;top:526.60px;font-size:10.5px;color:#000;transform:scaleX(0.9700);">0.4910</div>
<div class="t" style="left:728.50px;top:526.60px;font-size:10.5px;color:#000;transform:scaleX(0.9700);">0.4905</div>
<div class="t" style="left:803.50px;top:526.60px;font-size:10.5px;color:#000;transform:scaleX(0.9700);">0.4908</div>
<div class="t" style="left:902.50px;top:526.60px;font-size:10.5px;color:#000;transform:scaleX(0.9700);">2508</div>
<div class="t" style="left:950.50px;top:526.60px;font-size:10.5px;color:#000;transform:scaleX(0.9500);">Ted</div>
<div class="t" style="left:2.60px;top:541.57px;font-size:10.5px;color:#000;transform:scaleX(0.9700);">93</div>
<div class="t" style="left:24.50px;top:541.57px;font-size:10.5px;color:#000;transform:scaleX(0.9700);">2804</div>
<div class="t" style="left:77.50px;top:541.57px;font-size:10.5px;color:#000;transform:scaleX(0.9700);">1.720</div>
<div class="t" style="left:154.50px;top:541.57px;font-size:10.5px;color:#e0202a;transform:scaleX(0.9700);">0.1910</div>
<div class="t" style="left:222.50px;top:541.57px;font-size:10.5px;color:#000;transform:scaleX(0.9700);">1.5175</div>
<div class="t" style="left:288.50px;top:541.57px;font-size:10.5px;color:#000;transform:scaleX(0.9700);">0.3060</div>
<div class="t" style="left:370.50px;top:541.57px;font-size:10.5px;color:#000;transform:scaleX(0.9700);">0.3025</div>
<div class="t" style="left:449.50px;top:541.57px;font-size:10.5px;color:#000;transform:scaleX(0.9700);">0.4915</div>
<div class="t" style="left:515.50px;top:541.57px;font-size:10.5px;color:#000;transform:scaleX(0.9700);">0.4910</div>
<div class="t" style="left:582.50px;top:541.57px;font-size:10.5px;color:#000;transform:scaleX(0.9700);">0.4915</div>
<div class="t" style="left:648.50px;top:541.57px;font-size:10.5px;color:#000;transform:scaleX(0.9700);">0.4915</div>
<div class="t" style="left:728.50px;top:541.57px;font-size:10.5px;color:#000;transform:scaleX(0.9700);">0.4910</div>
<div class="t" style="left:803.50px;top:541.57px;font-size:10.5px;color:#000;transform:scaleX(0.9700);">0.4913</div>
<div class="t" style="left:902.50px;top:541.57px;font-size:10.5px;color:#000;transform:scaleX(0.9700);">2502</div>
<div class="t" style="left:950.50px;top:541.57px;font-size:10.5px;color:#000;transform:scaleX(0.9500);">Ted</div>
<div class="t" style="left:2.60px;top:556.55px;font-size:10.5px;color:#000;transform:scaleX(0.9700);">94</div>
<div class="t" style="left:24.50px;top:556.55px;font-size:10.5px;color:#000;transform:scaleX(0.9700);">2805</div>
<div class="t" style="left:77.50px;top:556.55px;font-size:10.5px;color:#000;transform:scaleX(0.9700);">1.732</div>
<div class="t" style="left:154.50px;top:556.55px;font-size:10.5px;color:#000;transform:scaleX(0.9700);">0.1990</div>
<div class="t" style="left:222.50px;top:556.55px;font-size:10.5px;color:#000;transform:scaleX(0.9700);">1.5325</div>
<div class="t" style="left:288.50px;top:556.55px;font-size:10.5px;color:#000;transform:scaleX(0.9700);">0.3075</div>
<div class="t" style="left:370.50px;top:556.55px;font-size:10.5px;color:#000;transform:scaleX(0.9700);">0.3025</div>
<div class="t" style="left:449.50px;top:556.55px;font-size:10.5px;color:#000;transform:scaleX(0.9700);">0.4910</div>
<div class="t" style="left:515.50px;top:556.55px;font-size:10.5px;color:#000;transform:scaleX(0.9700);">0.4925</div>
<div class="t" style="left:582.50px;top:556.55px;font-size:10.5px;color:#000;transform:scaleX(0.9700);">0.4920</div>
<div class="t" style="left:648.50px;top:556.55px;font-size:10.5px;color:#000;transform:scaleX(0.9700);">0.4925</div>
<div class="t" style="left:728.50px;top:556.55px;font-size:10.5px;color:#000;transform:scaleX(0.9700);">0.4910</div>
<div class="t" style="left:803.50px;top:556.55px;font-size:10.5px;color:#000;transform:scaleX(0.9700);">0.4918</div>
<div class="t" style="left:902.50px;top:556.55px;font-size:10.5px;color:#000;transform:scaleX(0.9700);">2508</div>
<div class="t" style="left:950.50px;top:556.55px;font-size:10.5px;color:#000;transform:scaleX(0.9500);">Ted</div>
<div class="t" style="left:2.60px;top:571.54px;font-size:10.5px;color:#000;transform:scaleX(0.9700);">95</div>
<div class="t" style="left:24.50px;top:571.54px;font-size:10.5px;color:#000;transform:scaleX(0.9700);">2806</div>
<div class="t" style="left:77.50px;top:571.54px;font-size:10.5px;color:#000;transform:scaleX(0.9700);">1.730</div>
<div class="t" style="left:154.50px;top:571.54px;font-size:10.5px;color:#000;transform:scaleX(0.9700);">0.2035</div>
<div class="t" style="left:222.50px;top:571.54px;font-size:10.5px;color:#000;transform:scaleX(0.9700);">1.5260</div>
<div class="t" style="left:288.50px;top:571.54px;font-size:10.5px;color:#000;transform:scaleX(0.9700);">0.3060</div>
<div class="t" style="left:370.50px;top:571.54px;font-size:10.5px;color:#000;transform:scaleX(0.9700);">0.3025</div>
<div class="t" style="left:449.50px;top:571.54px;font-size:10.5px;color:#000;transform:scaleX(0.9700);">0.4935</div>
<div class="t" style="left:515.50px;top:571.54px;font-size:10.5px;color:#000;transform:scaleX(0.9700);">0.4910</div>
<div class="t" style="left:582.50px;top:571.54px;font-size:10.5px;color:#000;transform:scaleX(0.9700);">0.4920</div>
<div class="t" style="left:648.50px;top:571.54px;font-size:10.5px;color:#000;transform:scaleX(0.9700);">0.4935</div>
<div class="t" style="left:728.50px;top:571.54px;font-size:10.5px;color:#000;transform:scaleX(0.9700);">0.4910</div>
<div class="t" style="left:803.50px;top:571.54px;font-size:10.5px;color:#000;transform:scaleX(0.9700);">0.4922</div>
<div class="t" style="left:902.50px;top:571.54px;font-size:10.5px;color:#000;transform:scaleX(0.9700);">2508</div>
<div class="t" style="left:950.50px;top:571.54px;font-size:10.5px;color:#000;transform:scaleX(0.9500);">Alice</div>
<div class="t" style="left:2.60px;top:586.51px;font-size:10.5px;color:#000;transform:scaleX(0.9700);">96</div>
<div class="t" style="left:24.50px;top:586.51px;font-size:10.5px;color:#000;transform:scaleX(0.9700);">2807</div>
<div class="t" style="left:77.50px;top:586.51px;font-size:10.5px;color:#000;transform:scaleX(0.9700);">1.730</div>
<div class="t" style="left:154.50px;top:586.51px;font-size:10.5px;color:#000;transform:scaleX(0.9700);">0.2055</div>
<div class="t" style="left:222.50px;top:586.51px;font-size:10.5px;color:#000;transform:scaleX(0.9700);">1.5240</div>
<div class="t" style="left:288.50px;top:586.51px;font-size:10.5px;color:#000;transform:scaleX(0.9700);">0.3065</div>
<div class="t" style="left:370.50px;top:586.51px;font-size:10.5px;color:#000;transform:scaleX(0.9700);">0.3075</div>
<div class="t" style="left:449.50px;top:586.51px;font-size:10.5px;color:#000;transform:scaleX(0.9700);">0.4935</div>
<div class="t" style="left:515.50px;top:586.51px;font-size:10.5px;color:#000;transform:scaleX(0.9700);">0.4960</div>
<div class="t" style="left:582.50px;top:586.51px;font-size:10.5px;color:#000;transform:scaleX(0.9700);">0.4960</div>
<div class="t" style="left:648.50px;top:586.51px;font-size:10.5px;color:#000;transform:scaleX(0.9700);">0.4960</div>
<div class="t" style="left:728.50px;top:586.51px;font-size:10.5px;color:#000;transform:scaleX(0.9700);">0.4935</div>
<div class="t" style="left:803.50px;top:586.51px;font-size:10.5px;color:#000;transform:scaleX(0.9700);">0.4952</div>
<div class="t" style="left:902.50px;top:586.51px;font-size:10.5px;color:#000;transform:scaleX(0.9700);">2502</div>
<div class="t" style="left:950.50px;top:586.51px;font-size:10.5px;color:#000;transform:scaleX(0.9500);">Ted</div>
<div class="t" style="left:2.60px;top:601.50px;font-size:10.5px;color:#000;transform:scaleX(0.9700);">97</div>
<div class="t" style="left:24.50px;top:601.50px;font-size:10.5px;color:#000;transform:scaleX(0.9700);">2808</div>
<div class="t" style="left:77.50px;top:601.50px;font-size:10.5px;color:#000;transform:scaleX(0.9700);">1.724</div>
<div class="t" style="left:154.50px;top:601.50px;font-size:10.5px;color:#000;transform:scaleX(0.9700);">0.1975</div>
<div class="t" style="left:222.50px;top:601.50px;font-size:10.5px;color:#000;transform:scaleX(0.9700);">1.5265</div>
<div class="t" style="left:288.50px;top:601.50px;font-size:10.5px;color:#000;transform:scaleX(0.9700);">0.3055</div>
<div class="t" style="left:370.50px;top:601.50px;font-size:10.5px;color:#000;transform:scaleX(0.9700);">0.3030</div>
<div class="t" style="left:449.50px;top:601.50px;font-size:10.5px;color:#000;transform:scaleX(0.9700);">0.4910</div>
<div class="t" style="left:515.50px;top:601.50px;font-size:10.5px;color:#000;transform:scaleX(0.9700);">0.4935</div>
<div class="t" style="left:582.50px;top:601.50px;font-size:10.5px;color:#000;transform:scaleX(0.9700);">0.4920</div>
<div class="t" style="left:648.50px;top:601.50px;font-size:10.5px;color:#000;transform:scaleX(0.9700);">0.4935</div>
<div class="t" style="left:728.50px;top:601.50px;font-size:10.5px;color:#000;transform:scaleX(0.9700);">0.4910</div>
<div class="t" style="left:803.50px;top:601.50px;font-size:10.5px;color:#000;transform:scaleX(0.9700);">0.4922</div>
<div class="t" style="left:902.50px;top:601.50px;font-size:10.5px;color:#000;transform:scaleX(0.9700);">2501</div>
<div class="t" style="left:950.50px;top:601.50px;font-size:10.5px;color:#000;transform:scaleX(0.9500);">Ted</div>
<div class="t" style="left:2.60px;top:616.47px;font-size:10.5px;color:#000;transform:scaleX(0.9700);">98</div>
<div class="t" style="left:24.50px;top:616.47px;font-size:10.5px;color:#000;transform:scaleX(0.9700);">2809</div>
<div class="t" style="left:77.50px;top:616.47px;font-size:10.5px;color:#e0202a;transform:scaleX(0.9700);">1.751</div>
<div class="t" style="left:154.50px;top:616.47px;font-size:10.5px;color:#000;transform:scaleX(0.9700);">0.2005</div>
<div class="t" style="left:222.50px;top:616.47px;font-size:10.5px;color:#e0202a;transform:scaleX(0.9700);">1.5600</div>
<div class="t" style="left:288.50px;top:616.47px;font-size:10.5px;color:#000;transform:scaleX(0.9700);">0.3055</div>
<div class="t" style="left:370.50px;top:616.47px;font-size:10.5px;color:#000;transform:scaleX(0.9700);">0.3025</div>
<div class="t" style="left:449.50px;top:616.47px;font-size:10.5px;color:#000;transform:scaleX(0.9700);">0.4910</div>
<div class="t" style="left:515.50px;top:616.47px;font-size:10.5px;color:#000;transform:scaleX(0.9700);">0.4925</div>
<div class="t" style="left:582.50px;top:616.47px;font-size:10.5px;color:#000;transform:scaleX(0.9700);">0.4920</div>
<div class="t" style="left:648.50px;top:616.47px;font-size:10.5px;color:#000;transform:scaleX(0.9700);">0.4925</div>
<div class="t" style="left:728.50px;top:616.47px;font-size:10.5px;color:#000;transform:scaleX(0.9700);">0.4910</div>
<div class="t" style="left:803.50px;top:616.47px;font-size:10.5px;color:#000;transform:scaleX(0.9700);">0.4918</div>
<div class="t" style="left:902.50px;top:616.47px;font-size:10.5px;color:#000;transform:scaleX(0.9700);">2508</div>
<div class="t" style="left:950.50px;top:616.47px;font-size:10.5px;color:#000;transform:scaleX(0.9500);">Betty</div>
<div class="t" style="left:2.60px;top:631.46px;font-size:10.5px;color:#000;transform:scaleX(0.9700);">99</div>
<div class="t" style="left:24.50px;top:631.46px;font-size:10.5px;color:#000;transform:scaleX(0.9700);">2810</div>
<div class="t" style="left:77.50px;top:631.46px;font-size:10.5px;color:#000;transform:scaleX(0.9700);">1.701</div>
<div class="t" style="left:154.50px;top:631.46px;font-size:10.5px;color:#000;transform:scaleX(0.9700);">0.1960</div>
<div class="t" style="left:222.50px;top:631.46px;font-size:10.5px;color:#000;transform:scaleX(0.9700);">1.5050</div>
<div class="t" style="left:288.50px;top:631.46px;font-size:10.5px;color:#000;transform:scaleX(0.9700);">0.2990</div>
<div class="t" style="left:370.50px;top:631.46px;font-size:10.5px;color:#000;transform:scaleX(0.9700);">0.3045</div>
<div class="t" style="left:449.50px;top:631.46px;font-size:10.5px;color:#000;transform:scaleX(0.9700);">0.4966</div>
<div class="t" style="left:515.50px;top:631.46px;font-size:10.5px;color:#000;transform:scaleX(0.9700);">0.4910</div>
<div class="t" style="left:582.50px;top:631.46px;font-size:10.5px;color:#000;transform:scaleX(0.9700);">0.4990</div>
<div class="t" style="left:648.50px;top:631.46px;font-size:10.5px;color:#000;transform:scaleX(0.9700);">0.4990</div>
<div class="t" style="left:728.50px;top:631.46px;font-size:10.5px;color:#000;transform:scaleX(0.9700);">0.4910</div>
<div class="t" style="left:803.50px;top:631.46px;font-size:10.5px;color:#000;transform:scaleX(0.9700);">0.4955</div>
<div class="t" style="left:902.50px;top:631.46px;font-size:10.5px;color:#000;transform:scaleX(0.9700);">2505</div>
<div class="t" style="left:950.50px;top:631.46px;font-size:10.5px;color:#000;transform:scaleX(0.9500);">Betty</div>
</div>
<div style="position:absolute;left:1255px;top:114px;width:16px;height:643px;background:#f0f0f0"></div>
<div style="position:absolute;left:1256px;top:508px;width:14px;height:227px;background:#cdcdcd"></div>
<div style="position:absolute;left:288px;top:757px;width:983px;height:16px;background:#f0f0f0"></div>
<div style="position:absolute;left:304px;top:758px;width:775px;height:14px;background:#cdcdcd"></div>
<svg style="left:7px;top:7px" width="16" height="16" viewBox="0 0 16 16">
<rect x="0.7" y="0.7" width="14.6" height="14.6" rx="2.3" fill="#f4e81c" stroke="#6f6a10" stroke-width="1.1"/>
<ellipse cx="7.9" cy="8.2" rx="5.0" ry="6.4" transform="rotate(38 7.9 8.2)" fill="#fff" stroke="#2a2a2a" stroke-width="0.9" stroke-dasharray="3 0.7"/>
<ellipse cx="6.6" cy="6.5" rx="0.6" ry="0.9" fill="#999"/><ellipse cx="9.2" cy="6.9" rx="0.6" ry="0.9" fill="#999"/>
<path d="M6.3 10.4 Q7.6 11.4 8.8 10.6" stroke="#888" stroke-width="0.9" fill="none"/>
</svg>
<svg style="left:1165px;top:14px" width="10" height="1" viewBox="0 0 10 1"><rect x="0" y="0" width="10" height="1" fill="#1e1e1e"/></svg>
<svg style="left:1207px;top:9px" width="11" height="11" viewBox="0.5 0.5 11 11"><rect x="1" y="1" width="9" height="9" fill="none" stroke="#1e1e1e" stroke-width="1"/></svg>
<svg style="left:1251px;top:9px" width="11" height="11" viewBox="0 0 11 11"><path d="M1 1 L10 10 M10 1 L1 10" stroke="#1e1e1e" stroke-width="1.1"/></svg>
<svg style="left:0px;top:52px" width="30" height="40" viewBox="0 0 30 40"><g>
<path d="M8.5 21 V11 H17.5 L21.5 15 V20" fill="#dcecf9" stroke="#3a96dd" stroke-width="1.4" stroke-linejoin="round"/>
<path d="M17.5 11 V15 H21.5" fill="none" stroke="#3a96dd" stroke-width="1"/>
<rect x="11" y="14.8" width="4.5" height="1.3" fill="#3a96dd"/>
<rect x="11" y="17.5" width="8" height="1.6" fill="#8fbfe6"/>
<path d="M4.2 29.5 V14.6 H7.5" fill="none" stroke="#1e1e1e" stroke-width="1.6" stroke-linejoin="round"/>
<path d="M10.8 20.3 H23.8 L19.6 29.8 H3.8 Z" fill="#1e1e1e" stroke="#1e1e1e" stroke-width="0.6" stroke-linejoin="round"/>
</g></svg>
<div style="position:absolute;left:30px;top:63px;width:1px;height:20px;background:#cfcfd4"></div>
<div style="position:absolute;left:61px;top:63px;width:1px;height:20px;background:#cfcfd4"></div>
<div style="position:absolute;left:119px;top:63px;width:1px;height:20px;background:#cfcfd4"></div>
<div style="position:absolute;left:203px;top:63px;width:1px;height:20px;background:#cfcfd4"></div>
<div style="position:absolute;left:235px;top:63px;width:1px;height:20px;background:#cfcfd4"></div>
<svg style="left:0px;top:52px" width="60" height="40" viewBox="0 0 60 40">
<path d="M35.8 12.3 V29.6 H54.8" fill="none" stroke="#1e1e1e" stroke-width="1.7"/>
<path d="M38.3 21 L39.9 17.5 L43.2 19.7 L45.9 17.5 L48.1 19.1 L51.1 13.1 L53.8 14.8" fill="none" stroke="#3a96dd" stroke-width="1.5" stroke-linejoin="round"/>
<path d="M38.3 25.1 L41.5 24 L43.7 26.2 L47 23.5 L49.2 24.6 L51.4 21.9 L53.8 23.5" fill="none" stroke="#1e1e1e" stroke-width="1.2" stroke-linejoin="round"/>
</svg>
<svg style="left:72px;top:62px" width="15" height="14" viewBox="0 0 15 14"><rect x="0" y="0" width="15" height="14" rx="1" fill="#3a96dd" opacity="0.85"/><rect x="1.0" y="3.4" width="2.7" height="2.8" fill="#f4f9fd"/><rect x="1.0" y="6.9" width="2.7" height="2.8" fill="#f4f9fd"/><rect x="1.0" y="10.4" width="2.7" height="2.8" fill="#f4f9fd"/><rect x="4.4" y="3.4" width="2.7" height="2.8" fill="#f4f9fd"/><rect x="4.4" y="6.9" width="2.7" height="2.8" fill="#f4f9fd"/><rect x="4.4" y="10.4" width="2.7" height="2.8" fill="#f4f9fd"/><rect x="7.8" y="3.4" width="2.7" height="2.8" fill="#f4f9fd"/><rect x="7.8" y="6.9" width="2.7" height="2.8" fill="#f4f9fd"/><rect x="7.8" y="10.4" width="2.7" height="2.8" fill="#f4f9fd"/><rect x="11.2" y="3.4" width="2.7" height="2.8" fill="#f4f9fd"/><rect x="11.2" y="6.9" width="2.7" height="2.8" fill="#f4f9fd"/><rect x="11.2" y="10.4" width="2.7" height="2.8" fill="#f4f9fd"/></svg>
<svg style="left:68px;top:68px" width="15" height="14" viewBox="0 0 15 14"><rect x="0" y="0" width="15" height="14" rx="1" fill="#1e1e1e"/><rect x="1.00" y="3.50" width="2.75" height="2.58" fill="#fff"/><rect x="1.00" y="6.83" width="2.75" height="2.58" fill="#fff"/><rect x="1.00" y="10.17" width="2.75" height="2.58" fill="#fff"/><rect x="4.50" y="3.50" width="2.75" height="2.58" fill="#fff"/><rect x="4.50" y="6.83" width="2.75" height="2.58" fill="#fff"/><rect x="4.50" y="10.17" width="2.75" height="2.58" fill="#fff"/><rect x="8.00" y="3.50" width="2.75" height="2.58" fill="#fff"/><rect x="8.00" y="6.83" width="2.75" height="2.58" fill="#fff"/><rect x="8.00" y="10.17" width="2.75" height="2.58" fill="#fff"/><rect x="11.50" y="3.50" width="2.75" height="2.58" fill="#fff"/><rect x="11.50" y="6.83" width="2.75" height="2.58" fill="#fff"/><rect x="11.50" y="10.17" width="2.75" height="2.58" fill="#fff"/></svg>
<div style="position:absolute;left:90px;top:59px;width:26px;height:27px;box-sizing:border-box;border:1.5px solid #4a9be2;background:#fafcfe"></div>
<div style="position:absolute;left:122px;top:59px;width:52px;height:27px;box-sizing:border-box;border:1.5px solid #4a9be2;background:#fafcfe"></div>
<div style="position:absolute;left:147px;top:59px;width:2px;height:27px;background:#1a78d2"></div>
<svg style="left:93px;top:62px" width="19" height="18" viewBox="0 0 19 18"><rect x="0" y="0" width="19" height="18" rx="1" fill="#1e1e1e"/><rect x="1.00" y="3.50" width="2.85" height="2.75" fill="#fff"/><rect x="1.00" y="7.00" width="2.85" height="2.75" fill="#fff"/><rect x="1.00" y="10.50" width="2.85" height="2.75" fill="#fff"/><rect x="1.00" y="14.00" width="2.85" height="2.75" fill="#fff"/><rect x="4.60" y="3.50" width="2.85" height="2.75" fill="#fff"/><rect x="4.60" y="7.00" width="2.85" height="2.75" fill="#fff"/><rect x="4.60" y="10.50" width="2.85" height="2.75" fill="#fff"/><rect x="4.60" y="14.00" width="2.85" height="2.75" fill="#fff"/><rect x="8.20" y="3.50" width="2.85" height="2.75" fill="#fff"/><rect x="8.20" y="7.00" width="2.85" height="2.75" fill="#fff"/><rect x="8.20" y="10.50" width="2.85" height="2.75" fill="#fff"/><rect x="8.20" y="14.00" width="2.85" height="2.75" fill="#fff"/><rect x="11.80" y="3.50" width="2.85" height="2.75" fill="#fff"/><rect x="11.80" y="7.00" width="2.85" height="2.75" fill="#fff"/><rect x="11.80" y="10.50" width="2.85" height="2.75" fill="#fff"/><rect x="11.80" y="14.00" width="2.85" height="2.75" fill="#fff"/><rect x="15.40" y="3.50" width="2.85" height="2.75" fill="#fff"/><rect x="15.40" y="7.00" width="2.85" height="2.75" fill="#fff"/><rect x="15.40" y="10.50" width="2.85" height="2.75" fill="#fff"/><rect x="15.40" y="14.00" width="2.85" height="2.75" fill="#fff"/></svg>
<svg style="left:99px;top:69px" width="16" height="16" viewBox="0 0 16 16"><rect x="1" y="1" width="14" height="14" fill="#fff" stroke="#2e8b45" stroke-width="1.6"/>
<path d="M4.8 4.5 L11.2 11.8 M11.2 4.5 L4.8 11.8" stroke="#1f7a36" stroke-width="2.2"/></svg>
<svg style="left:126px;top:64px" width="18" height="18" viewBox="0 0 18 18"><rect x="0" y="0" width="18" height="18" rx="1" fill="#1e1e1e"/><rect x="1.00" y="4.00" width="2.65" height="2.62" fill="#fff"/><rect x="1.00" y="7.38" width="2.65" height="2.62" fill="#fff"/><rect x="1.00" y="10.75" width="2.65" height="2.62" fill="#fff"/><rect x="1.00" y="14.12" width="2.65" height="2.62" fill="#fff"/><rect x="4.40" y="4.00" width="2.65" height="2.62" fill="#3a96dd"/><rect x="4.40" y="7.38" width="2.65" height="2.62" fill="#3a96dd"/><rect x="4.40" y="10.75" width="2.65" height="2.62" fill="#3a96dd"/><rect x="4.40" y="14.12" width="2.65" height="2.62" fill="#3a96dd"/><rect x="7.80" y="4.00" width="2.65" height="2.62" fill="#fff"/><rect x="7.80" y="7.38" width="2.65" height="2.62" fill="#fff"/><rect x="7.80" y="10.75" width="2.65" height="2.62" fill="#fff"/><rect x="7.80" y="14.12" width="2.65" height="2.62" fill="#fff"/><rect x="11.20" y="4.00" width="2.65" height="2.62" fill="#fff"/><rect x="11.20" y="7.38" width="2.65" height="2.62" fill="#fff"/><rect x="11.20" y="10.75" width="2.65" height="2.62" fill="#fff"/><rect x="11.20" y="14.12" width="2.65" height="2.62" fill="#fff"/><rect x="14.60" y="4.00" width="2.65" height="2.62" fill="#fff"/><rect x="14.60" y="7.38" width="2.65" height="2.62" fill="#fff"/><rect x="14.60" y="10.75" width="2.65" height="2.62" fill="#fff"/><rect x="14.60" y="14.12" width="2.65" height="2.62" fill="#fff"/></svg>
<svg style="left:150px;top:62px" width="22" height="21" viewBox="0 0 22 21"><ellipse cx="11" cy="4" rx="10.2" ry="2.6" fill="#1e1e1e"/>
<path d="M0.9 4.3 Q1.5 7 6.5 10.2 Q9 11.8 9 14.5 V19.5 Q10.5 20.5 13 19 V14.5 Q13 11.8 15.5 10.2 Q20.5 7 21.1 4.3 Z" fill="#1e1e1e"/>
<ellipse cx="11" cy="3.6" rx="8.4" ry="1.5" fill="#f2f2f2"/></svg>
<svg style="left:178px;top:64px" width="19" height="18" viewBox="0 0 19 18"><rect x="0" y="0" width="19" height="18" rx="1" fill="#1e1e1e"/><rect x="1.00" y="4.00" width="2.85" height="2.62" fill="#fff"/><rect x="1.00" y="7.38" width="2.85" height="2.62" fill="#fff"/><rect x="1.00" y="10.75" width="2.85" height="2.62" fill="#fff"/><rect x="1.00" y="14.12" width="2.85" height="2.62" fill="#fff"/><rect x="4.60" y="4.00" width="2.85" height="2.62" fill="#fff"/><rect x="4.60" y="7.38" width="2.85" height="2.62" fill="#fff"/><rect x="4.60" y="10.75" width="2.85" height="2.62" fill="#fff"/><rect x="4.60" y="14.12" width="2.85" height="2.62" fill="#fff"/><rect x="8.20" y="4.00" width="2.85" height="2.62" fill="#fff"/><rect x="8.20" y="7.38" width="2.85" height="2.62" fill="#fff"/><rect x="8.20" y="10.75" width="2.85" height="2.62" fill="#fff"/><rect x="8.20" y="14.12" width="2.85" height="2.62" fill="#fff"/><rect x="11.80" y="4.00" width="2.85" height="2.62" fill="#fff"/><rect x="11.80" y="7.38" width="2.85" height="2.62" fill="#fff"/><rect x="11.80" y="10.75" width="2.85" height="2.62" fill="#fff"/><rect x="11.80" y="14.12" width="2.85" height="2.62" fill="#fff"/><rect x="15.40" y="4.00" width="2.85" height="2.62" fill="#fff"/><rect x="15.40" y="7.38" width="2.85" height="2.62" fill="#fff"/><rect x="15.40" y="10.75" width="2.85" height="2.62" fill="#fff"/><rect x="15.40" y="14.12" width="2.85" height="2.62" fill="#fff"/><circle cx="5.6" cy="8.5" r="2.6" fill="#d6ebf8"/><circle cx="5.6" cy="8.5" r="1.4" fill="#2f8fcf"/></svg>
<svg style="left:200px;top:52px" width="40" height="40" viewBox="0 0 40 40">
<path d="M13 27 L22 18" stroke="#1e1e1e" stroke-width="4.6" stroke-linecap="round"/>
<path d="M23.6 11.3 A4.4 4.4 0 1 0 28.6 16.2" fill="none" stroke="#1e1e1e" stroke-width="3.8"/>
<circle cx="12.8" cy="27.2" r="1.15" fill="#fff"/>
</svg>
<svg style="left:240px;top:52px" width="24" height="40" viewBox="0 0 24 40">
<rect x="4.6" y="11" width="7.6" height="17.8" fill="#fff" stroke="#1e1e1e" stroke-width="1.3"/>
<path d="M12 10 L16.5 10.6 V29.4 L12 30 Z" fill="#1e1e1e"/>
<rect x="16.5" y="11" width="2" height="18" fill="#a8a8a8"/>
<circle cx="13.6" cy="21" r="0.6" fill="#ddd"/>
<path d="M1.2 19.1 H6.3 V16.8 L11.3 20.5 L6.3 24.2 V21.9 H1.2 Z" fill="#3a96dd" stroke="#3a96dd" stroke-width="0.5" stroke-linejoin="round"/>
</svg>
<svg style="left:10px;top:117px" width="21" height="21" viewBox="0 0 21 21"><circle cx="10.5" cy="10.5" r="10" fill="#3a96dd"/>
<path d="M10.5 4 V17 M4 10.5 H17" stroke="#fff" stroke-width="3.8"/></svg>
<svg style="left:36px;top:117px" width="20" height="20" viewBox="0 0 20 20"><path d="M2.5 18 L3.8 13 L13.5 3.3 L16.7 6.5 L7 16.2 Z" fill="#fff" stroke="#1e1e1e" stroke-width="1.6" stroke-linejoin="round"/>
<path d="M5.2 13.5 L14.5 4.3 M6.6 14.9 L15.7 5.7" stroke="#1e1e1e" stroke-width="1"/>
<path d="M14.2 2.6 L15.8 1 L19 4.2 L17.4 5.8 Z" fill="#3a96dd"/>
<path d="M2.5 18 L3.2 15.3 L5.2 17.3 Z" fill="#1e1e1e"/></svg>
<svg style="left:65px;top:117px" width="16" height="21" viewBox="0 0 16 21"><rect x="4.6" y="0.6" width="5.6" height="2.2" rx="0.6" fill="none" stroke="#1e1e1e" stroke-width="1"/>
<rect x="0.5" y="2.6" width="14.6" height="2.6" rx="1" fill="#1e1e1e"/>
<path d="M1.8 6 H13.8 V19 Q13.8 20 12.8 20 H2.8 Q1.8 20 1.8 19 Z" fill="#b4b4b4" stroke="#1e1e1e" stroke-width="1.1"/>
<rect x="5.2" y="6" width="1.2" height="14" fill="#1e1e1e"/>
<rect x="9.3" y="6" width="1.2" height="14" fill="#1e1e1e"/>
<rect x="6.4" y="6.5" width="2.9" height="13" fill="#fff"/></svg>
<svg style="left:88px;top:117px" width="22" height="21" viewBox="0 0 22 21"><path d="M1 1 H9 L11 3 V14 H1 Z" fill="#e6f1fb" stroke="#3a96dd" stroke-width="1.3"/>
<path d="M3 5 H8 M3 8 H8 M3 11 H8" stroke="#3a96dd" stroke-width="1"/>
<path d="M6 5 H15.5 L20 9.5 V20 H6 Z" fill="#fff" stroke="#1e1e1e" stroke-width="1.5" stroke-linejoin="round"/>
<path d="M8.5 10 H12 M8.5 12.7 H17.5 M8.5 15.2 H17.5 M8.5 17.7 H17.5" stroke="#1e1e1e" stroke-width="1.2"/>
<path d="M15 5 V10 H20" fill="none" stroke="#1e1e1e" stroke-width="1.2"/></svg>
<div style="position:absolute;left:114px;top:118px;width:1px;height:20px;background:#cfcfd4"></div>
<svg style="left:122px;top:119px" width="18" height="18" viewBox="0 0 18 18"><path d="M1 0.5 L17 9 L1 17.5 Z" fill="#3a96dd"/></svg>
<svg style="left:146px;top:117px" width="21" height="21" viewBox="0 0 21 21"><path d="M10.5 0.5 V8.5 M6.8 5.2 L10.5 9 L14.2 5.2" fill="none" stroke="#3a96dd" stroke-width="2.6"/><path d="M1 10.5 H4.5 L5 12 H16 L16.5 10.5 H20 V20.5 H1 Z" fill="#1e1e1e"/>
<rect x="4.2" y="12.3" width="12.6" height="3.2" fill="#c8c8c8"/><rect x="4.2" y="15.5" width="12.6" height="1" fill="#555"/></svg>
<svg style="left:172px;top:117px" width="21" height="21" viewBox="0 0 21 21"><path d="M10.5 10 V2.5 M6.8 6 L10.5 2.2 L14.2 6" fill="none" stroke="#3a96dd" stroke-width="2.6"/><path d="M1 10.5 H4.5 L5 12 H16 L16.5 10.5 H20 V20.5 H1 Z" fill="#1e1e1e"/>
<rect x="4.2" y="12.3" width="12.6" height="3.2" fill="#c8c8c8"/><rect x="4.2" y="15.5" width="12.6" height="1" fill="#555"/></svg>
<svg style="left:10px;top:324px" width="21" height="21" viewBox="0 0 21 21"><circle cx="10.5" cy="10.5" r="10" fill="#3a96dd"/>
<path d="M10.5 4 V17 M4 10.5 H17" stroke="#fff" stroke-width="3.8"/></svg>
<svg style="left:36px;top:325px" width="20" height="20" viewBox="0 0 20 20"><path d="M2.5 18 L3.8 13 L13.5 3.3 L16.7 6.5 L7 16.2 Z" fill="#fff" stroke="#1e1e1e" stroke-width="1.6" stroke-linejoin="round"/>
<path d="M5.2 13.5 L14.5 4.3 M6.6 14.9 L15.7 5.7" stroke="#1e1e1e" stroke-width="1"/>
<path d="M14.2 2.6 L15.8 1 L19 4.2 L17.4 5.8 Z" fill="#3a96dd"/>
<path d="M2.5 18 L3.2 15.3 L5.2 17.3 Z" fill="#1e1e1e"/></svg>
<svg style="left:65px;top:325px" width="16" height="21" viewBox="0 0 16 21"><rect x="4.6" y="0.6" width="5.6" height="2.2" rx="0.6" fill="none" stroke="#1e1e1e" stroke-width="1"/>
<rect x="0.5" y="2.6" width="14.6" height="2.6" rx="1" fill="#1e1e1e"/>
<path d="M1.8 6 H13.8 V19 Q13.8 20 12.8 20 H2.8 Q1.8 20 1.8 19 Z" fill="#b4b4b4" stroke="#1e1e1e" stroke-width="1.1"/>
<rect x="5.2" y="6" width="1.2" height="14" fill="#1e1e1e"/>
<rect x="9.3" y="6" width="1.2" height="14" fill="#1e1e1e"/>
<rect x="6.4" y="6.5" width="2.9" height="13" fill="#fff"/></svg>
<svg style="left:88px;top:324px" width="21" height="21" viewBox="0 0 21 21"><circle cx="10.5" cy="10.5" r="9.7" fill="#fff" fill-opacity="0.6" stroke="#2a2a2a" stroke-width="1.4"/>
<path d="M5 5.2 L7.5 5.2 L7.5 12.6 L14 12.6 L14 15.1 L5 15.1 Z" fill="#3a96dd"/>
<path d="M5.5 14.6 L7.5 7.5 L12 12.6 Z" fill="#3a96dd"/>
<path d="M7.5 12.8 Q10 8.3 16.8 8.3" fill="none" stroke="#3a96dd" stroke-width="2.5"/></svg>
<svg style="left:10px;top:576px" width="21" height="21" viewBox="0 0 21 21"><circle cx="10.5" cy="10.5" r="10" fill="#3a96dd"/>
<path d="M10.5 4 V17 M4 10.5 H17" stroke="#fff" stroke-width="3.8"/></svg>
<svg style="left:36px;top:576px" width="21" height="21" viewBox="0 0 21 21"><circle cx="10.5" cy="10.5" r="10" fill="#3a96dd"/>
<path d="M10.5 4 V17 M4 10.5 H17" stroke="#fff" stroke-width="3.8"/></svg>
<div class="t" style="left:36.30px;top:586.12px;font-size:13.5px;color:#000;transform:scaleX(1.1584);font-weight:700;">A..</div>
<svg style="left:63px;top:577px" width="20" height="20" viewBox="0 0 20 20"><path d="M2.5 18 L3.8 13 L13.5 3.3 L16.7 6.5 L7 16.2 Z" fill="#fff" stroke="#a8a8a8" stroke-width="1.6" stroke-linejoin="round"/>
<path d="M5.2 13.5 L14.5 4.3 M6.6 14.9 L15.7 5.7" stroke="#a8a8a8" stroke-width="1"/>
<path d="M14.2 2.6 L15.8 1 L19 4.2 L17.4 5.8 Z" fill="#a8a8a8"/>
<path d="M2.5 18 L3.2 15.3 L5.2 17.3 Z" fill="#a8a8a8"/></svg>
<svg style="left:91px;top:578px" width="16" height="19" viewBox="0 0 16 19"><rect x="0.5" y="3" width="15" height="2.2" rx="0.8" fill="#a8a8a8"/>
<rect x="5.5" y="0.8" width="5" height="2.4" fill="#a8a8a8"/>
<path d="M1.8 6 H14.2 L13.5 18.5 H2.5 Z" fill="#a8a8a8"/>
<rect x="4.2" y="7.2" width="1.8" height="10" fill="#e8e8e8"/>
<rect x="7.1" y="7.2" width="1.8" height="10" fill="#e8e8e8"/>
<rect x="10" y="7.2" width="1.8" height="10" fill="#e8e8e8"/></svg>
<svg style="left:250px;top:98.4px" width="9" height="11" viewBox="0 0 9 11"><path d="M2 0.8 H7 M2.6 0.8 V5.8 H6.4 V0.8 M0.8 5.8 H8.2 M4.5 5.8 V10.2" fill="none" stroke="#1e1e1e" stroke-width="1.3"/>
<rect x="4.8" y="0.8" width="1.4" height="5" fill="#1e1e1e"/></svg>
<svg style="left:265px;top:98.8px" width="10" height="9" viewBox="0 0 10 9"><path d="M1 1 L9 8 M9 1 L1 8" stroke="#1e1e1e" stroke-width="1.4"/></svg>
<svg style="left:250px;top:303.4px" width="9" height="11" viewBox="0 0 9 11"><path d="M2 0.8 H7 M2.6 0.8 V5.8 H6.4 V0.8 M0.8 5.8 H8.2 M4.5 5.8 V10.2" fill="none" stroke="#1e1e1e" stroke-width="1.3"/>
<rect x="4.8" y="0.8" width="1.4" height="5" fill="#1e1e1e"/></svg>
<svg style="left:265px;top:303.8px" width="10" height="9" viewBox="0 0 10 9"><path d="M1 1 L9 8 M9 1 L1 8" stroke="#1e1e1e" stroke-width="1.4"/></svg>
<svg style="left:250px;top:555.4px" width="9" height="11" viewBox="0 0 9 11"><path d="M2 0.8 H7 M2.6 0.8 V5.8 H6.4 V0.8 M0.8 5.8 H8.2 M4.5 5.8 V10.2" fill="none" stroke="#1e1e1e" stroke-width="1.3"/>
<rect x="4.8" y="0.8" width="1.4" height="5" fill="#1e1e1e"/></svg>
<svg style="left:265px;top:555.8px" width="10" height="9" viewBox="0 0 10 9"><path d="M1 1 L9 8 M9 1 L1 8" stroke="#1e1e1e" stroke-width="1.4"/></svg>
<svg width="0" height="0" style="position:absolute"><defs><pattern id="grip" width="4" height="4" patternUnits="userSpaceOnUse"><rect x="0" y="0" width="1" height="1" fill="#9d9da6"/><rect x="2" y="2" width="1" height="1" fill="#9d9da6"/><rect x="1" y="1" width="1" height="1" fill="#fafafa"/><rect x="3" y="3" width="1" height="1" fill="#fafafa"/></pattern></defs></svg>
<svg style="left:93px;top:101px" width="152" height="6" viewBox="0 0 152 6"><rect x="0" y="0" width="152" height="5" fill="url(#grip)"/></svg>
<svg style="left:110px;top:306px" width="134" height="6" viewBox="0 0 134 6"><rect x="0" y="0" width="134" height="5" fill="url(#grip)"/></svg>
<svg style="left:143px;top:558px" width="101" height="6" viewBox="0 0 101 6"><rect x="0" y="0" width="101" height="5" fill="url(#grip)"/></svg>
<svg style="left:428px;top:98px" width="10" height="9" viewBox="0 0 10 9"><path d="M1 1 L9 8 M9 1 L1 8" stroke="#fff" stroke-width="1.3"/></svg>
<svg style="left:1259.5px;top:102px" width="8" height="5" viewBox="0 0 8 5"><path d="M0 0 H7.5 L3.75 4.3 Z" fill="#6a6a6a"/></svg>
<svg style="left:1258.3px;top:119px" width="9" height="6" viewBox="0 0 9 6"><path d="M1 5 L4.5 1.5 L8 5" fill="none" stroke="#555" stroke-width="1.7"/></svg>
<svg style="left:1258.3px;top:746px" width="9" height="6" viewBox="0 0 9 6"><path d="M1 1 L4.5 4.5 L8 1" fill="none" stroke="#555" stroke-width="1.7"/></svg>
<svg style="left:293px;top:762px" width="6" height="9" viewBox="0 0 6 9"><path d="M5 1 L1.5 4.5 L5 8" fill="none" stroke="#555" stroke-width="1.7"/></svg>
<svg style="left:1244px;top:761px" width="6" height="9" viewBox="0 0 6 9"><path d="M1 1 L4.5 4.5 L1 8" fill="none" stroke="#555" stroke-width="1.7"/></svg>
<div style="position:absolute;left:264px;top:350px;width:15px;height:193px;background:#f0f0f0"></div>
<div style="position:absolute;left:265px;top:367px;width:13px;height:137px;background:#cdcdcd"></div>
<svg style="left:267px;top:356px" width="9" height="6" viewBox="0 0 9 6"><path d="M1 5 L4.5 1.5 L8 5" fill="none" stroke="#555" stroke-width="1.7"/></svg>
<svg style="left:267px;top:533px" width="9" height="6" viewBox="0 0 9 6"><path d="M1 1 L4.5 4.5 L8 1" fill="none" stroke="#555" stroke-width="1.7"/></svg>
<div style="position:absolute;left:1267px;top:784px;width:2px;height:2px;background:#9a9a9a"></div>
<div style="position:absolute;left:1263px;top:788px;width:2px;height:2px;background:#9a9a9a"></div>
<div style="position:absolute;left:1267px;top:788px;width:2px;height:2px;background:#9a9a9a"></div>
<div style="position:absolute;left:1259px;top:792px;width:2px;height:2px;background:#9a9a9a"></div>
<div style="position:absolute;left:1263px;top:792px;width:2px;height:2px;background:#9a9a9a"></div>
<div style="position:absolute;left:1267px;top:792px;width:2px;height:2px;background:#9a9a9a"></div>
<div style="position:absolute;left:1234px;top:0px;width:46px;height:1px;background:#111"></div>
</body></html>
